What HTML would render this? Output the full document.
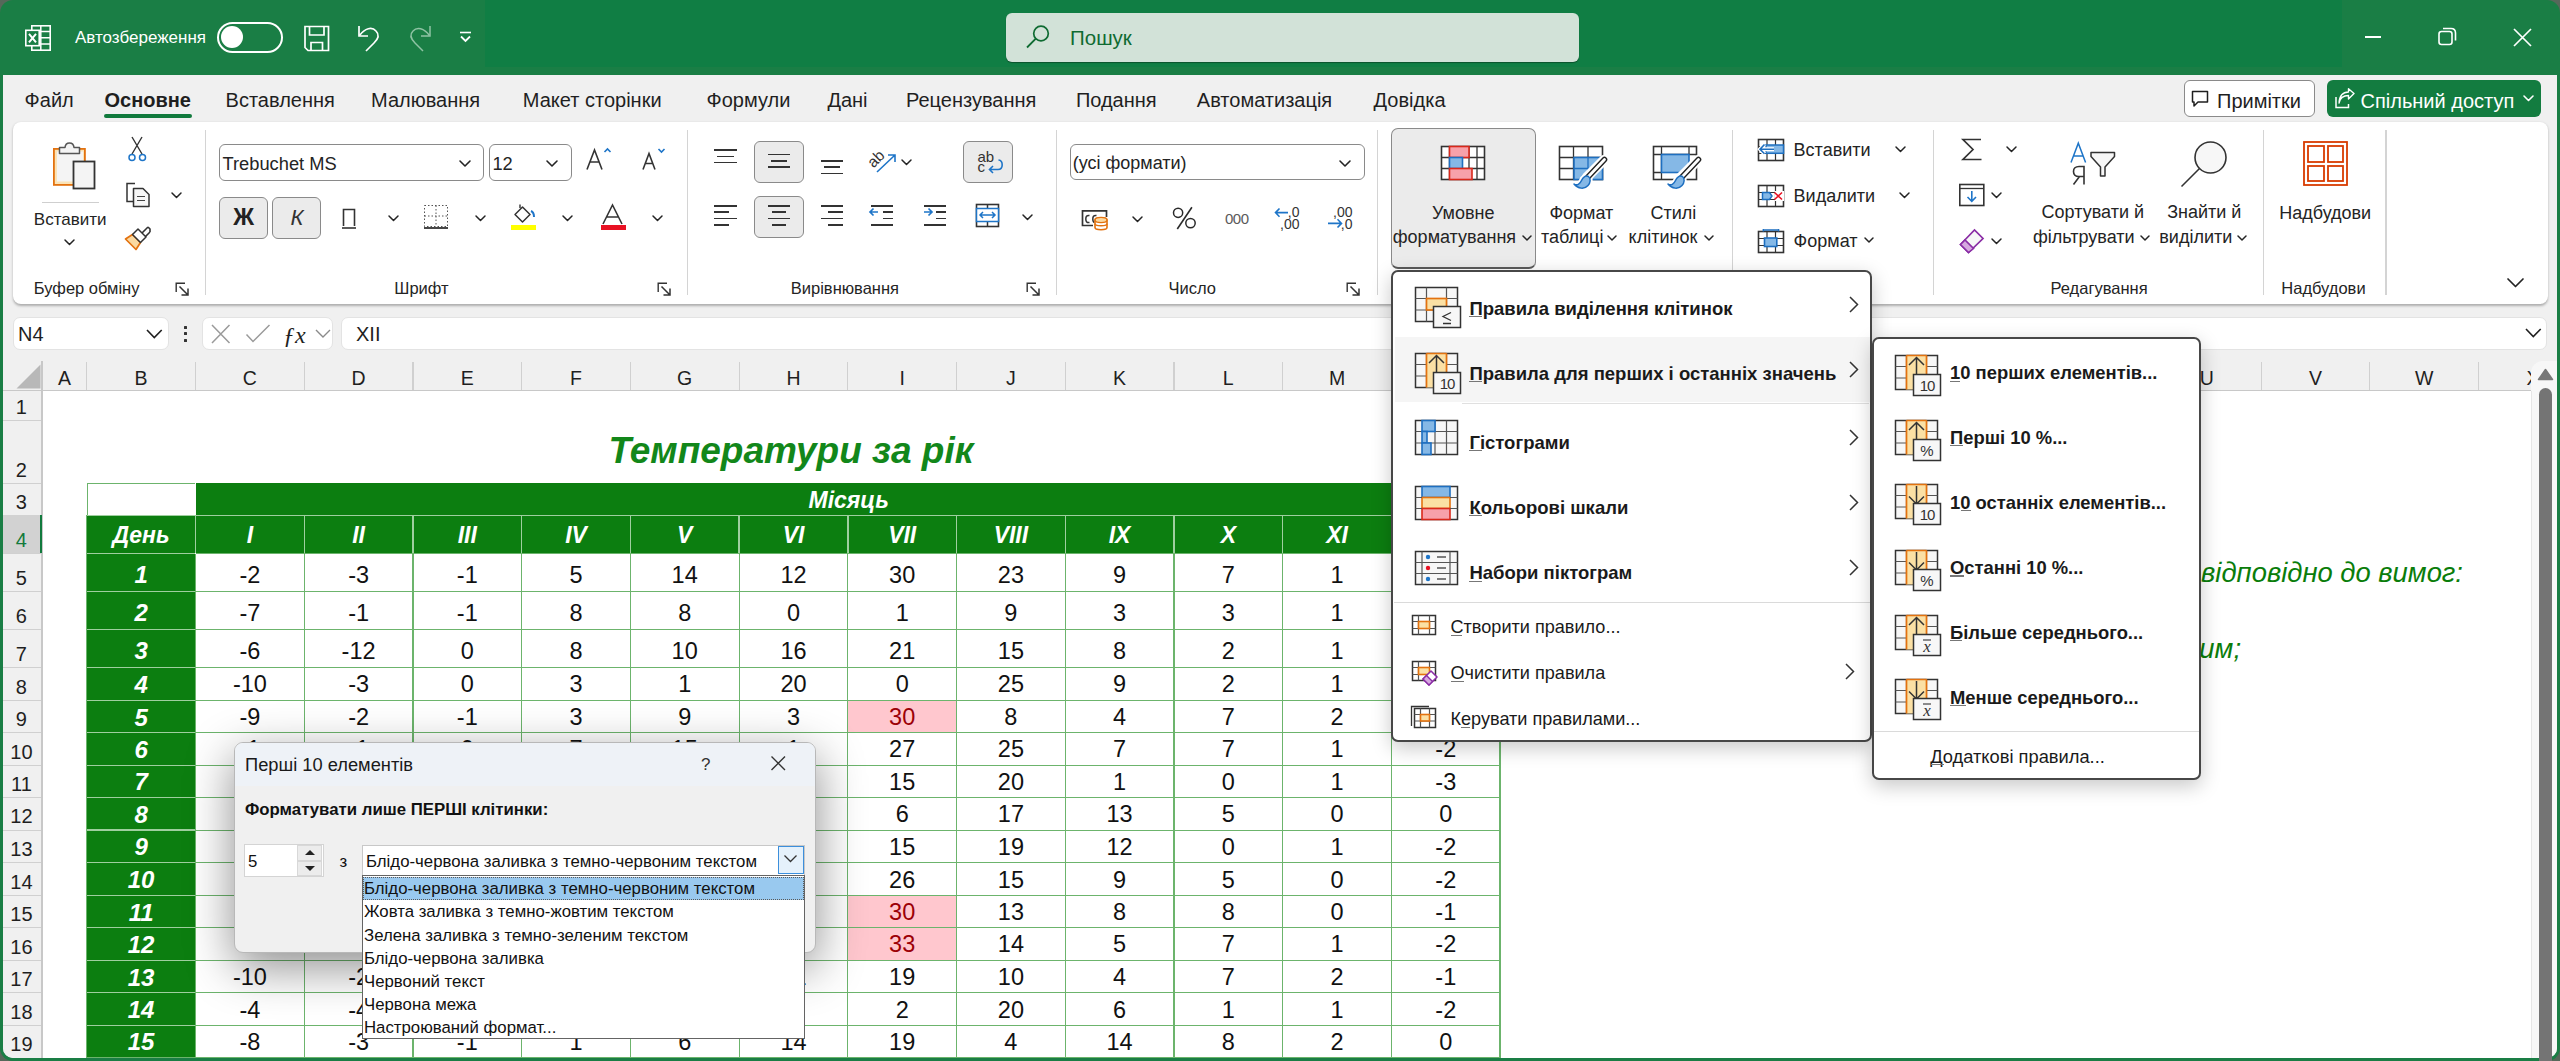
<!DOCTYPE html><html><head><meta charset="utf-8"><style>
html,body{margin:0;padding:0;}
body{width:2560px;height:1061px;overflow:hidden;position:relative;background:#56685a;font-family:"Liberation Sans", sans-serif;}
.b{position:absolute;}
.t{position:absolute;white-space:nowrap;line-height:1.15;}
</style></head><body>
<div class="b" style="left:0.00px;top:0.00px;width:2560.00px;height:1061.00px;background:#1a7e45;border-radius:13px;"></div>
<div class="b" style="left:485.00px;top:0.00px;width:1856.50px;height:66.80px;background:#107e44;"></div>
<div class="b" style="left:3.00px;top:75.00px;width:2554.00px;height:982.60px;background:#f0f0f0;border-radius:0 0 10px 10px;"></div>
<svg class="b" style="left:24.0px;top:24.0px;" width="28" height="28" viewBox="0 0 28 28" fill="none"><rect x="7.8" y="1.8" width="18.4" height="24.4" stroke="#fff" stroke-width="1.6" fill="none"/>
<path d="M15 7.6H26.2M15 13.8H26.2M15 20H26.2M16.8 1.8V26.2" stroke="#fff" stroke-width="1.5"/>
<rect x="1.8" y="6.3" width="13.4" height="15.4" fill="#1a7e45" stroke="#fff" stroke-width="1.6"/>
<path d="M5 9.8L12 18.3M12 9.8L5 18.3" stroke="#fff" stroke-width="2"/></svg>
<div class="t" style="left:75.0px;top:28.1px;font-size:17px;color:#ffffff;font-weight:normal;font-style:normal;">Автозбереження</div>
<div class="b" style="left:216.50px;top:21.50px;width:66.50px;height:31.00px;border:2px solid #fff;border-radius:16px;box-sizing:border-box;"></div>
<div class="b" style="left:221.00px;top:26.00px;width:22.00px;height:22.00px;background:#fff;border-radius:50%;"></div>
<svg class="b" style="left:303.0px;top:25.0px;" width="28" height="28" viewBox="0 0 28 28" fill="none"><path d="M2 1.5H25.5V25.5H5L2 22.5Z" stroke="#fff" stroke-width="1.7" fill="none"/>
<path d="M6.5 1.5V10H21V1.5" stroke="#fff" stroke-width="1.7"/>
<path d="M8 25.5V17.5H19.5V25.5" stroke="#fff" stroke-width="1.7"/></svg>
<svg class="b" style="left:355.0px;top:24.0px;" width="28" height="28" viewBox="0 0 28 28" fill="none"><path d="M4 2V12H13" stroke="#fff" stroke-width="1.7"/>
<path d="M4.5 11.5 C10 4 17 2.5 21 7 C25 11 23 15 19 19 L11 27" stroke="#fff" stroke-width="1.7" fill="none"/></svg>
<svg class="b" style="left:406.0px;top:24.0px;" width="28" height="28" viewBox="0 0 28 28" fill="none"><path d="M24 2V12H15" stroke="#8fc3a4" stroke-width="1.5"/>
<path d="M23.5 11.5 C18 4 11 2.5 7 7 C3 11 5 15 9 19 L17 27" stroke="#8fc3a4" stroke-width="1.5" fill="none"/></svg>
<svg class="b" style="left:458.0px;top:30.0px;" width="16" height="14" viewBox="0 0 16 14" fill="none"><path d="M2 2.5H13" stroke="#fff" stroke-width="1.6"/><path d="M3 6.5L7.5 11L12 6.5" stroke="#fff" stroke-width="1.8" fill="none"/></svg>
<div class="b" style="left:1005.50px;top:12.50px;width:573.50px;height:49.50px;background:#d2e2d8;border-radius:6px;box-shadow:0 1px 1px rgba(0,0,0,0.35);"></div>
<svg class="b" style="left:1025.0px;top:24.0px;" width="26" height="26" viewBox="0 0 26 26" fill="none"><circle cx="16" cy="9.5" r="7.3" stroke="#0f6b32" stroke-width="1.7"/><path d="M10.8 14.7L2 23.5" stroke="#0f6b32" stroke-width="1.8"/></svg>
<div class="t" style="left:1070.0px;top:26.1px;font-size:20.5px;color:#0f6b32;font-weight:normal;font-style:normal;">Пошук</div>
<div class="b" style="left:2364.50px;top:35.80px;width:16.00px;height:1.80px;background:#fff;"></div>
<svg class="b" style="left:2437.0px;top:26.0px;" width="22" height="22" viewBox="0 0 22 22" fill="none"><rect x="2" y="5.5" width="13" height="13" rx="2.5" stroke="#fff" stroke-width="1.6"/><path d="M6 2.5H14C17 2.5 18.5 4 18.5 7V14.5" stroke="#fff" stroke-width="1.6" fill="none"/></svg>
<svg class="b" style="left:2512.0px;top:27.0px;" width="22" height="22" viewBox="0 0 22 22" fill="none"><path d="M2 2L19 19M19 2L2 19" stroke="#fff" stroke-width="1.7"/></svg>
<div class="t" style="left:24.6px;top:89.4px;font-size:20px;color:#1f1f1f;font-weight:normal;font-style:normal;width:47px;">Файл</div>
<div class="t" style="left:104.5px;top:89.4px;font-size:20px;color:#1f1f1f;font-weight:bold;font-style:normal;width:85.5px;">Основне</div>
<div class="t" style="left:225.6px;top:89.4px;font-size:20px;color:#1f1f1f;font-weight:normal;font-style:normal;width:105.3px;">Вставлення</div>
<div class="t" style="left:371.0px;top:89.4px;font-size:20px;color:#1f1f1f;font-weight:normal;font-style:normal;width:110.8px;">Малювання</div>
<div class="t" style="left:522.8px;top:89.4px;font-size:20px;color:#1f1f1f;font-weight:normal;font-style:normal;width:143.6px;">Макет сторінки</div>
<div class="t" style="left:706.5px;top:89.4px;font-size:20px;color:#1f1f1f;font-weight:normal;font-style:normal;width:84.9px;">Формули</div>
<div class="t" style="left:827.4px;top:89.4px;font-size:20px;color:#1f1f1f;font-weight:normal;font-style:normal;width:41.6px;">Дані</div>
<div class="t" style="left:906.0px;top:89.4px;font-size:20px;color:#1f1f1f;font-weight:normal;font-style:normal;width:130.5px;">Рецензування</div>
<div class="t" style="left:1075.9px;top:89.4px;font-size:20px;color:#1f1f1f;font-weight:normal;font-style:normal;width:81.1px;">Подання</div>
<div class="t" style="left:1196.8px;top:89.4px;font-size:20px;color:#1f1f1f;font-weight:normal;font-style:normal;width:136.2px;">Автоматизація</div>
<div class="t" style="left:1373.6px;top:89.4px;font-size:20px;color:#1f1f1f;font-weight:normal;font-style:normal;width:72.8px;">Довідка</div>
<div class="b" style="left:104.00px;top:113.50px;width:88.00px;height:4.00px;background:#117a3d;border-radius:2px;"></div>
<div class="b" style="left:2183.50px;top:79.50px;width:131.50px;height:37.00px;background:#fff;border:1.3px solid #8a8a8a;border-radius:6px;box-sizing:border-box;"></div>
<svg class="b" style="left:2190.0px;top:89.0px;" width="22" height="20" viewBox="0 0 22 20" fill="none"><path d="M2.5 2.5H17.5V13H8L4 17V13H2.5Z" stroke="#1f1f1f" stroke-width="1.5" fill="none" stroke-linejoin="round"/></svg>
<div class="t" style="left:2217.0px;top:89.6px;font-size:20px;color:#1f1f1f;font-weight:normal;font-style:normal;">Примітки</div>
<div class="b" style="left:2327.00px;top:79.50px;width:214.00px;height:37.00px;background:#137c40;border-radius:6px;"></div>
<svg class="b" style="left:2333.0px;top:88.0px;" width="24" height="22" viewBox="0 0 24 22" fill="none"><path d="M3 9V19.5H15.5V16" stroke="#fff" stroke-width="1.5" fill="none"/><path d="M6 15C7 10 10.5 7.5 15.5 7.5V11L21 5.5L15.5 0.8V4C10 4 6.5 8 6 15Z" stroke="#fff" stroke-width="1.4" fill="none" stroke-linejoin="round"/></svg>
<div class="t" style="left:2360.5px;top:89.6px;font-size:20px;color:#ffffff;font-weight:normal;font-style:normal;">Спільний доступ</div>
<svg class="b" style="left:2521.5px;top:93.8px;" width="13" height="8.5" viewBox="0 0 13 8.5" fill="none"><path d="M2 2 L6.5 6.5 L11 2" stroke="#fff" stroke-width="1.6" stroke-linecap="round" stroke-linejoin="round"/></svg>
<div class="b" style="left:12.60px;top:121.80px;width:2535.20px;height:182.20px;background:#fff;border-radius:8px;box-shadow:0 1.5px 2.5px rgba(0,0,0,0.28);"></div>
<div class="b" style="left:205.00px;top:129.50px;width:1.20px;height:165.00px;background:#d4d4d4;"></div>
<div class="b" style="left:686.70px;top:129.50px;width:1.20px;height:165.00px;background:#d4d4d4;"></div>
<div class="b" style="left:1055.80px;top:129.50px;width:1.20px;height:165.00px;background:#d4d4d4;"></div>
<div class="b" style="left:1376.90px;top:129.50px;width:1.20px;height:165.00px;background:#d4d4d4;"></div>
<div class="b" style="left:1731.80px;top:129.50px;width:1.20px;height:165.00px;background:#d4d4d4;"></div>
<div class="b" style="left:1933.10px;top:129.50px;width:1.20px;height:165.00px;background:#d4d4d4;"></div>
<div class="b" style="left:2262.90px;top:129.50px;width:1.20px;height:165.00px;background:#d4d4d4;"></div>
<div class="b" style="left:2385.40px;top:129.50px;width:1.20px;height:165.00px;background:#d4d4d4;"></div>
<div class="t" style="left:33.8px;top:278.5px;font-size:16.5px;color:#242424;font-weight:normal;font-style:normal;">Буфер обміну</div>
<div class="t" style="left:394.3px;top:278.8px;font-size:16.5px;color:#242424;font-weight:normal;font-style:normal;">Шрифт</div>
<div class="t" style="left:790.8px;top:278.6px;font-size:16.5px;color:#242424;font-weight:normal;font-style:normal;">Вирівнювання</div>
<div class="t" style="left:1168.6px;top:278.6px;font-size:16.5px;color:#242424;font-weight:normal;font-style:normal;">Число</div>
<div class="t" style="left:2050.5px;top:279.4px;font-size:16.5px;color:#242424;font-weight:normal;font-style:normal;">Редагування</div>
<div class="t" style="left:2281.3px;top:278.8px;font-size:16.5px;color:#242424;font-weight:normal;font-style:normal;">Надбудови</div>
<svg class="b" style="left:174.5px;top:281.5px;" width="15" height="15" viewBox="0 0 15 15" fill="none"><path d="M1.2 10V1.2H10" stroke="#333" stroke-width="1.4" fill="none"/><path d="M4.5 4.5L13 13M13 6.5V13H6.5" stroke="#333" stroke-width="1.5" fill="none"/></svg>
<svg class="b" style="left:656.5px;top:281.5px;" width="15" height="15" viewBox="0 0 15 15" fill="none"><path d="M1.2 10V1.2H10" stroke="#333" stroke-width="1.4" fill="none"/><path d="M4.5 4.5L13 13M13 6.5V13H6.5" stroke="#333" stroke-width="1.5" fill="none"/></svg>
<svg class="b" style="left:1025.5px;top:281.5px;" width="15" height="15" viewBox="0 0 15 15" fill="none"><path d="M1.2 10V1.2H10" stroke="#333" stroke-width="1.4" fill="none"/><path d="M4.5 4.5L13 13M13 6.5V13H6.5" stroke="#333" stroke-width="1.5" fill="none"/></svg>
<svg class="b" style="left:1346.3px;top:281.5px;" width="15" height="15" viewBox="0 0 15 15" fill="none"><path d="M1.2 10V1.2H10" stroke="#333" stroke-width="1.4" fill="none"/><path d="M4.5 4.5L13 13M13 6.5V13H6.5" stroke="#333" stroke-width="1.5" fill="none"/></svg>
<svg class="b" style="left:50.0px;top:140.0px;" width="48" height="50" viewBox="0 0 48 50" fill="none"><rect x="3.9" y="8.9" width="31" height="36" stroke="#e3720f" stroke-width="1.8" fill="#fbe3b6"/>
<rect x="7" y="11.5" width="26" height="30" fill="#f4f4f4"/>
<path d="M9.5 13.5V7.5H15C15.5 1.5 23.5 1.5 24 7.5H29.5V13.5Z" stroke="#555" stroke-width="1.5" fill="#f4f4f4" stroke-linejoin="round"/>
<rect x="23.5" y="21.5" width="21" height="27" stroke="#333" stroke-width="1.8" fill="#f4f4f4"/></svg>
<div class="b" style="left:42.00px;top:201.50px;width:57.00px;height:1.10px;background:#cfcfcf;"></div>
<div class="t" style="left:33.8px;top:209.8px;font-size:17px;color:#242424;font-weight:normal;font-style:normal;">Вставити</div>
<svg class="b" style="left:62.5px;top:238.2px;" width="13" height="8.5" viewBox="0 0 13 8.5" fill="none"><path d="M2 2 L6.5 6.5 L11 2" stroke="#242424" stroke-width="1.5" stroke-linecap="round" stroke-linejoin="round"/></svg>
<svg class="b" style="left:126.0px;top:135.0px;" width="24" height="28" viewBox="0 0 24 28" fill="none"><path d="M6 2L16 19M16 2L6 19" stroke="#333" stroke-width="1.4"/>
<circle cx="6" cy="22.5" r="3" stroke="#1e75c8" stroke-width="1.5" fill="#fff"/><circle cx="16.5" cy="22.5" r="3" stroke="#1e75c8" stroke-width="1.5" fill="#fff"/></svg>
<svg class="b" style="left:123.0px;top:181.0px;" width="30" height="28" viewBox="0 0 30 28" fill="none"><path d="M12 2.5H4V20.5H10" stroke="#333" stroke-width="1.5" fill="none"/>
<path d="M10.5 7.5H20L26 13.5V25.5H10.5Z" stroke="#333" stroke-width="1.5" fill="#f7f7f7" stroke-linejoin="round"/>
<path d="M14 15.5H22M14 19.5H22" stroke="#444" stroke-width="1.2"/></svg>
<svg class="b" style="left:170.2px;top:190.8px;" width="13" height="8.5" viewBox="0 0 13 8.5" fill="none"><path d="M2 2 L6.5 6.5 L11 2" stroke="#242424" stroke-width="1.5" stroke-linecap="round" stroke-linejoin="round"/></svg>
<svg class="b" style="left:123.0px;top:225.0px;" width="30" height="28" viewBox="0 0 30 28" fill="none"><path d="M2.5 14L13 24.5L17.5 17.5L9.5 9.5Z" stroke="#e3720f" stroke-width="1.7" fill="#fbd9a0" stroke-linejoin="round"/>
<path d="M9.5 9.5L15 4L23 12L17.5 17.5Z" stroke="#333" stroke-width="1.5" fill="#fff" stroke-linejoin="round"/><path d="M19 8L25 2M22.5 11.5L27 7M25 2L27 4L27 7" stroke="#333" stroke-width="1.6" fill="none"/></svg>
<div class="b" style="left:219.00px;top:144.00px;width:265.20px;height:36.70px;border:1.3px solid #8a8a8a;border-radius:6px;box-sizing:border-box;"></div>
<div class="t" style="left:222.5px;top:153.1px;font-size:18.3px;color:#242424;font-weight:normal;font-style:normal;">Trebuchet MS</div>
<svg class="b" style="left:457.6px;top:158.5px;" width="14" height="9.0" viewBox="0 0 14 9.0" fill="none"><path d="M2 2 L7.0 7.0 L12 2" stroke="#242424" stroke-width="1.6" stroke-linecap="round" stroke-linejoin="round"/></svg>
<div class="b" style="left:488.70px;top:144.00px;width:83.00px;height:36.70px;border:1.3px solid #8a8a8a;border-radius:6px;box-sizing:border-box;"></div>
<div class="t" style="left:492.4px;top:153.1px;font-size:18.3px;color:#242424;font-weight:normal;font-style:normal;">12</div>
<svg class="b" style="left:545.0px;top:158.5px;" width="14" height="9.0" viewBox="0 0 14 9.0" fill="none"><path d="M2 2 L7.0 7.0 L12 2" stroke="#242424" stroke-width="1.6" stroke-linecap="round" stroke-linejoin="round"/></svg>
<svg class="b" style="left:584.0px;top:146.0px;" width="30" height="26" viewBox="0 0 30 26" fill="none"><path d="M3 23.5L10.5 4L18 23.5M5.8 16H15.2" stroke="#333" stroke-width="1.6" fill="none"/><path d="M20.5 6L23.5 3L26.5 6" stroke="#1e75c8" stroke-width="1.6" fill="none"/></svg>
<svg class="b" style="left:640.0px;top:146.0px;" width="28" height="26" viewBox="0 0 28 26" fill="none"><path d="M3 23.5L9 7.5L15 23.5M5.3 17.5H12.7" stroke="#333" stroke-width="1.6" fill="none"/><path d="M18.5 3L21.5 6L24.5 3" stroke="#1e75c8" stroke-width="1.6" fill="none"/></svg>
<div class="b" style="left:219.00px;top:197.30px;width:49.40px;height:41.40px;background:#ebebeb;border:1.3px solid #8a8a8a;border-radius:6px;box-sizing:border-box;"></div>
<div class="b" style="left:272.30px;top:197.30px;width:49.20px;height:41.40px;background:#ebebeb;border:1.3px solid #8a8a8a;border-radius:6px;box-sizing:border-box;"></div>
<div class="t" style="left:213.7px;width:60px;text-align:center;top:204.3px;font-size:23px;color:#222;font-weight:bold;font-style:normal;">Ж</div>
<div class="t" style="left:266.9px;width:60px;text-align:center;top:205.2px;font-size:22px;color:#333;font-weight:normal;font-style:italic;">К</div>
<svg class="b" style="left:340.0px;top:206.0px;" width="18" height="24" viewBox="0 0 18 24" fill="none"><path d="M3.5 20V3.5H14.5V20" stroke="#333" stroke-width="1.6" fill="none"/><path d="M2 22H16" stroke="#333" stroke-width="1.6"/></svg>
<svg class="b" style="left:386.9px;top:214.2px;" width="13" height="8.5" viewBox="0 0 13 8.5" fill="none"><path d="M2 2 L6.5 6.5 L11 2" stroke="#242424" stroke-width="1.5" stroke-linecap="round" stroke-linejoin="round"/></svg>
<svg class="b" style="left:422.0px;top:203.0px;" width="28" height="28" viewBox="0 0 28 28" fill="none"><path d="M2.5 2.5H25.5V23.5H2.5Z M14 2.5V23.5 M2.5 13H25.5" stroke="#555" stroke-width="1" stroke-dasharray="1.5 2" fill="none"/><path d="M2 25H26" stroke="#333" stroke-width="1.8"/></svg>
<svg class="b" style="left:473.8px;top:214.2px;" width="13" height="8.5" viewBox="0 0 13 8.5" fill="none"><path d="M2 2 L6.5 6.5 L11 2" stroke="#242424" stroke-width="1.5" stroke-linecap="round" stroke-linejoin="round"/></svg>
<svg class="b" style="left:510.0px;top:203.0px;" width="28" height="30" viewBox="0 0 28 30" fill="none"><path d="M5 11.5L12.5 4L20 11.5L12.5 19Z" stroke="#333" stroke-width="1.5" fill="#fff" stroke-linejoin="round"/><path d="M10 5L10 1.5" stroke="#333" stroke-width="1.4"/><path d="M21 8C23.5 9 24 11 24 14" stroke="#1e75c8" stroke-width="2" fill="none"/></svg>
<div class="b" style="left:511.00px;top:224.60px;width:25.30px;height:5.90px;background:#ffff00;"></div>
<svg class="b" style="left:560.5px;top:214.2px;" width="13" height="8.5" viewBox="0 0 13 8.5" fill="none"><path d="M2 2 L6.5 6.5 L11 2" stroke="#242424" stroke-width="1.5" stroke-linecap="round" stroke-linejoin="round"/></svg>
<svg class="b" style="left:600.0px;top:203.0px;" width="28" height="24" viewBox="0 0 28 24" fill="none"><path d="M3 21L12.5 2L22 21M6.5 14H18.5" stroke="#333" stroke-width="1.6" fill="none"/></svg>
<div class="b" style="left:601.00px;top:224.60px;width:25.00px;height:5.90px;background:#e81123;"></div>
<svg class="b" style="left:650.5px;top:214.2px;" width="13" height="8.5" viewBox="0 0 13 8.5" fill="none"><path d="M2 2 L6.5 6.5 L11 2" stroke="#242424" stroke-width="1.5" stroke-linecap="round" stroke-linejoin="round"/></svg>
<div class="b" style="left:754.00px;top:141.00px;width:49.70px;height:41.50px;background:#ebebeb;border:1.3px solid #8a8a8a;border-radius:6px;box-sizing:border-box;"></div>
<div class="b" style="left:754.00px;top:196.00px;width:49.70px;height:41.50px;background:#ebebeb;border:1.3px solid #8a8a8a;border-radius:6px;box-sizing:border-box;"></div>
<div class="b" style="left:963.40px;top:141.00px;width:49.20px;height:41.50px;background:#ebebeb;border:1.3px solid #8a8a8a;border-radius:6px;box-sizing:border-box;"></div>
<div class="b" style="left:714.40px;top:149.43px;width:22.30px;height:1.75px;background:#333;"></div><div class="b" style="left:717.40px;top:155.53px;width:16.30px;height:1.75px;background:#333;"></div><div class="b" style="left:714.40px;top:161.62px;width:22.30px;height:1.75px;background:#333;"></div>
<div class="b" style="left:767.60px;top:153.72px;width:22.10px;height:1.75px;background:#333;"></div><div class="b" style="left:770.60px;top:159.82px;width:16.10px;height:1.75px;background:#333;"></div><div class="b" style="left:767.60px;top:166.32px;width:22.10px;height:1.75px;background:#333;"></div>
<div class="b" style="left:821.00px;top:159.82px;width:22.10px;height:1.75px;background:#333;"></div><div class="b" style="left:824.00px;top:166.32px;width:16.10px;height:1.75px;background:#333;"></div><div class="b" style="left:821.00px;top:172.53px;width:22.10px;height:1.75px;background:#333;"></div>
<div class="b" style="left:714.40px;top:205.12px;width:22.30px;height:1.75px;background:#333;"></div><div class="b" style="left:714.40px;top:211.12px;width:15.00px;height:1.75px;background:#333;"></div><div class="b" style="left:714.40px;top:217.53px;width:22.30px;height:1.75px;background:#333;"></div><div class="b" style="left:714.40px;top:224.12px;width:15.00px;height:1.75px;background:#333;"></div>
<div class="b" style="left:767.60px;top:205.12px;width:22.10px;height:1.75px;background:#333;"></div><div class="b" style="left:771.60px;top:211.12px;width:14.00px;height:1.75px;background:#333;"></div><div class="b" style="left:767.60px;top:217.53px;width:22.10px;height:1.75px;background:#333;"></div><div class="b" style="left:771.60px;top:224.12px;width:14.00px;height:1.75px;background:#333;"></div>
<div class="b" style="left:821.00px;top:205.12px;width:22.10px;height:1.75px;background:#333;"></div><div class="b" style="left:828.00px;top:211.12px;width:15.10px;height:1.75px;background:#333;"></div><div class="b" style="left:821.00px;top:217.53px;width:22.10px;height:1.75px;background:#333;"></div><div class="b" style="left:828.00px;top:224.12px;width:15.10px;height:1.75px;background:#333;"></div>
<div class="b" style="left:871.00px;top:205.12px;width:22.30px;height:1.75px;background:#333;"></div><div class="b" style="left:883.00px;top:217.53px;width:10.30px;height:1.75px;background:#333;"></div><div class="b" style="left:871.00px;top:224.12px;width:22.30px;height:1.75px;background:#333;"></div>
<div class="b" style="left:883.00px;top:211.30px;width:10.30px;height:1.60px;background:#333;"></div>
<div class="b" style="left:924.00px;top:205.12px;width:22.30px;height:1.75px;background:#333;"></div><div class="b" style="left:936.00px;top:217.53px;width:10.30px;height:1.75px;background:#333;"></div><div class="b" style="left:924.00px;top:224.12px;width:22.30px;height:1.75px;background:#333;"></div>
<div class="b" style="left:936.00px;top:211.30px;width:10.30px;height:1.60px;background:#333;"></div>
<svg class="b" style="left:868.0px;top:206.0px;" width="14" height="14" viewBox="0 0 14 14" fill="none"><path d="M10 6H2M5.5 2.5L2 6L5.5 9.5" stroke="#1e75c8" stroke-width="1.7" fill="none"/></svg>
<svg class="b" style="left:922.0px;top:206.0px;" width="14" height="14" viewBox="0 0 14 14" fill="none"><path d="M2 6H10M6.5 2.5L10 6L6.5 9.5" stroke="#1e75c8" stroke-width="1.7" fill="none"/></svg>
<svg class="b" style="left:864.0px;top:144.0px;" width="36" height="32" viewBox="0 0 36 32" fill="none"><text x="0" y="0" transform="translate(9.5,24.5) rotate(-45)" font-family="Liberation Sans" font-size="15.5" fill="#333">ab</text><path d="M13 28L30.5 11.5M24 11H31V18" stroke="#1e75c8" stroke-width="1.6" fill="none"/></svg>
<svg class="b" style="left:900.2px;top:157.8px;" width="13" height="8.5" viewBox="0 0 13 8.5" fill="none"><path d="M2 2 L6.5 6.5 L11 2" stroke="#242424" stroke-width="1.5" stroke-linecap="round" stroke-linejoin="round"/></svg>
<svg class="b" style="left:974.0px;top:148.0px;" width="32" height="28" viewBox="0 0 32 28" fill="none"><text x="3.5" y="13.8" font-family="Liberation Sans" font-size="15" fill="#333">ab</text><text x="3.5" y="24" font-family="Liberation Sans" font-size="15" fill="#333">c</text><path d="M24.5 12C29.5 12.5 29.5 21.5 24 21.5H15.5M19 18L15.5 21.5L19 25" stroke="#1e75c8" stroke-width="1.6" fill="none"/></svg>
<svg class="b" style="left:974.0px;top:202.0px;" width="28" height="28" viewBox="0 0 28 28" fill="none"><rect x="2.5" y="2.5" width="22" height="22" stroke="#333" stroke-width="1.6" fill="#fff"/><path d="M13.5 2.5V24.5" stroke="#333" stroke-width="1.5"/><rect x="2.5" y="6.5" width="22" height="13" stroke="#1e75c8" stroke-width="1.5" fill="#fff"/><path d="M6 13H21M9 10L6 13L9 16M18 10L21 13L18 16" stroke="#1e75c8" stroke-width="1.5" fill="none"/></svg>
<svg class="b" style="left:1020.9px;top:212.8px;" width="13" height="8.5" viewBox="0 0 13 8.5" fill="none"><path d="M2 2 L6.5 6.5 L11 2" stroke="#242424" stroke-width="1.5" stroke-linecap="round" stroke-linejoin="round"/></svg>
<div class="b" style="left:1069.50px;top:144.20px;width:295.80px;height:36.30px;border:1.3px solid #8a8a8a;border-radius:6px;box-sizing:border-box;"></div>
<div class="t" style="left:1072.7px;top:152.9px;font-size:18px;color:#242424;font-weight:normal;font-style:normal;">(усі формати)</div>
<svg class="b" style="left:1338.3px;top:158.9px;" width="14" height="9.0" viewBox="0 0 14 9.0" fill="none"><path d="M2 2 L7.0 7.0 L12 2" stroke="#242424" stroke-width="1.6" stroke-linecap="round" stroke-linejoin="round"/></svg>
<svg class="b" style="left:1080.0px;top:208.0px;" width="30" height="26" viewBox="0 0 30 26" fill="none"><path d="M13 17.5H2.5V2.8H26.5V9" stroke="#333" stroke-width="1.7" fill="#fff"/><path d="M9.5 7.5C6.5 7 5.8 9 5.8 11C5.8 13 6.5 15 9.5 14.5M16.5 7.5C13.5 7 12.8 9 12.8 11C12.8 13 13.5 14.2 14.5 14.5" stroke="#333" stroke-width="1.5" fill="none"/>
<path d="M15 12C15 9.2 27 9.2 27 12V19.5C27 22.5 15 22.5 15 19.5Z" fill="#fff" stroke="#e3720f" stroke-width="1.6"/><ellipse cx="21" cy="12" rx="6" ry="2.6" fill="#fbd9a0" stroke="#e3720f" stroke-width="1.4"/><path d="M15 15.8C15 18.5 27 18.5 27 15.8" stroke="#e3720f" stroke-width="1.5" fill="none"/></svg>
<svg class="b" style="left:1131.2px;top:214.6px;" width="13" height="8.5" viewBox="0 0 13 8.5" fill="none"><path d="M2 2 L6.5 6.5 L11 2" stroke="#242424" stroke-width="1.5" stroke-linecap="round" stroke-linejoin="round"/></svg>
<svg class="b" style="left:1170.0px;top:204.0px;" width="28" height="30" viewBox="0 0 28 30" fill="none"><circle cx="8.1" cy="8.8" r="4.6" stroke="#2a2a2a" stroke-width="1.5"/><circle cx="20.5" cy="19.1" r="4.7" stroke="#2a2a2a" stroke-width="1.5"/><path d="M21.9 3.3L7.3 25" stroke="#2a2a2a" stroke-width="1.6"/></svg>
<div class="t" style="left:1225.0px;top:209.8px;font-size:15px;color:#5a5a5a;font-weight:normal;font-style:normal;letter-spacing:-0.5px;">000</div>
<svg class="b" style="left:1272.0px;top:203.0px;" width="30" height="30" viewBox="0 0 30 30" fill="none"><text x="27.5" y="13.5" text-anchor="end" font-family="Liberation Sans" font-size="14" fill="#333">,0</text><text x="27.5" y="26" text-anchor="end" font-family="Liberation Sans" font-size="14" fill="#333">,00</text>
<path d="M16 9.6H3.5M7.5 5.5L3.5 9.6L7.5 13.7" stroke="#1e75c8" stroke-width="1.6" fill="none"/></svg>
<svg class="b" style="left:1325.0px;top:203.0px;" width="30" height="30" viewBox="0 0 30 30" fill="none"><text x="27.5" y="13.5" text-anchor="end" font-family="Liberation Sans" font-size="14" fill="#333">,00</text><text x="27.5" y="26" text-anchor="end" font-family="Liberation Sans" font-size="14" fill="#333">,0</text>
<path d="M3 20.4H16.5M12.5 16.3L16.5 20.4L12.5 24.5" stroke="#1e75c8" stroke-width="1.6" fill="none"/></svg>
<div class="b" style="left:1390.90px;top:128.30px;width:144.80px;height:140.50px;background:#ebebeb;border:1.3px solid #8a8a8a;border-bottom:2px solid #5a5a5a;border-radius:7px;box-sizing:border-box;"></div>
<svg class="b" style="left:1439.0px;top:144.0px;" width="48" height="40" viewBox="0 0 48 40" fill="none"><rect x="2.5" y="2.5" width="43" height="33" stroke="#333" stroke-width="1.6" fill="#fff"/>
<path d="M2.5 13.5H45.5M2.5 24.5H45.5M10.5 2.5V35.5M30 2.5V35.5M38 2.5V35.5" stroke="#333" stroke-width="1.3"/>
<rect x="10.5" y="2.5" width="19.5" height="11" fill="#f7a1aa" stroke="#d9281b" stroke-width="1.6"/>
<rect x="10.5" y="13.5" width="13" height="11" fill="#85b8e6" stroke="#1e6fc0" stroke-width="1.6"/>
<rect x="10.5" y="24.5" width="22.5" height="11" fill="#f7a1aa" stroke="#d9281b" stroke-width="1.6"/></svg>
<div class="t" style="left:1063.2px;width:800px;text-align:center;top:202.6px;font-size:18px;color:#242424;font-weight:normal;font-style:normal;">Умовне</div>
<div class="t" style="left:1392.8px;top:227.1px;font-size:18px;color:#242424;font-weight:normal;font-style:normal;">форматування</div>
<svg class="b" style="left:1521.0px;top:233.5px;" width="12" height="8.0" viewBox="0 0 12 8.0" fill="none"><path d="M2 2 L6.0 6.0 L10 2" stroke="#242424" stroke-width="1.5" stroke-linecap="round" stroke-linejoin="round"/></svg>
<svg class="b" style="left:1557.0px;top:144.0px;" width="52" height="48" viewBox="0 0 52 48" fill="none"><rect x="2.5" y="2.5" width="43" height="33" stroke="#333" stroke-width="1.6" fill="#fff"/><path d="M2.5 13.5H45.5M2.5 24.5H17M16.5 2.5V35.5M31 2.5V13.5" stroke="#333" stroke-width="1.3"/><rect x="17" y="13.5" width="28.5" height="22" fill="#85b8e6" stroke="#1e6fc0" stroke-width="1.6"/><path d="M17 24.5H45.5M31 13.5V35.5" stroke="#1e6fc0" stroke-width="1.3"/><path d="M30 33L47 16" stroke="#fff" stroke-width="10" stroke-linecap="round"/><path d="M17 40C20 42 23 40 24.5 36.5C26 33 29 31 31.5 32.5C34 34.5 33.5 39 31 41.5C27.5 45.5 21 45 17 40Z" fill="#fff" stroke="#fff" stroke-width="5" stroke-linejoin="round"/><path d="M31 33L47.5 15.5" stroke="#222" stroke-width="5.6" stroke-linecap="round"/><path d="M31 33L47.5 15.5" stroke="#fff" stroke-width="2.8" stroke-linecap="round"/><path d="M17 40C20 42 23 40 24.5 36.5C26 33 29 31 31.5 32.5C34 34.5 33.5 39 31 41.5C27.5 45.5 21 45 17 40Z" fill="#85b8e6" stroke="#1e6fc0" stroke-width="1.5" stroke-linejoin="round"/></svg>
<svg class="b" style="left:1650.5px;top:144.0px;" width="52" height="48" viewBox="0 0 52 48" fill="none"><rect x="2.5" y="2.5" width="43" height="33" stroke="#333" stroke-width="1.6" fill="#fff"/><path d="M2.5 10.5H45.5M2.5 28.5H10.5M10.5 2.5V35.5M38 2.5V10.5" stroke="#333" stroke-width="1.3"/><rect x="10.5" y="10.5" width="27.5" height="18" fill="#85b8e6" stroke="#1e6fc0" stroke-width="1.6"/><path d="M30 33L47 16" stroke="#fff" stroke-width="10" stroke-linecap="round"/><path d="M17 40C20 42 23 40 24.5 36.5C26 33 29 31 31.5 32.5C34 34.5 33.5 39 31 41.5C27.5 45.5 21 45 17 40Z" fill="#fff" stroke="#fff" stroke-width="5" stroke-linejoin="round"/><path d="M31 33L47.5 15.5" stroke="#222" stroke-width="5.6" stroke-linecap="round"/><path d="M31 33L47.5 15.5" stroke="#fff" stroke-width="2.8" stroke-linecap="round"/><path d="M17 40C20 42 23 40 24.5 36.5C26 33 29 31 31.5 32.5C34 34.5 33.5 39 31 41.5C27.5 45.5 21 45 17 40Z" fill="#85b8e6" stroke="#1e6fc0" stroke-width="1.5" stroke-linejoin="round"/></svg>
<div class="t" style="left:1181.4px;width:800px;text-align:center;top:202.6px;font-size:18px;color:#242424;font-weight:normal;font-style:normal;">Формат</div>
<div class="t" style="left:1541.0px;top:227.1px;font-size:18px;color:#242424;font-weight:normal;font-style:normal;">таблиці</div>
<svg class="b" style="left:1606.0px;top:233.5px;" width="12" height="8.0" viewBox="0 0 12 8.0" fill="none"><path d="M2 2 L6.0 6.0 L10 2" stroke="#242424" stroke-width="1.5" stroke-linecap="round" stroke-linejoin="round"/></svg>
<div class="t" style="left:1273.3px;width:800px;text-align:center;top:202.6px;font-size:18px;color:#242424;font-weight:normal;font-style:normal;">Стилі</div>
<div class="t" style="left:1628.6px;top:227.1px;font-size:18px;color:#242424;font-weight:normal;font-style:normal;">клітинок</div>
<svg class="b" style="left:1703.0px;top:233.5px;" width="12" height="8.0" viewBox="0 0 12 8.0" fill="none"><path d="M2 2 L6.0 6.0 L10 2" stroke="#242424" stroke-width="1.5" stroke-linecap="round" stroke-linejoin="round"/></svg>
<svg class="b" style="left:1757.0px;top:137.0px;" width="28" height="25" viewBox="0 -1 28 25" fill="none"><rect x="1.5" y="1.5" width="25" height="21" stroke="#333" stroke-width="1.6" fill="#fff"/><path d="M1.5 8.5H26.5M1.5 15.5H26.5M10 1.5V22.5M18.5 1.5V22.5" stroke="#333" stroke-width="1.2"/><rect x="9" y="7" width="17.5" height="8.3" fill="#85b8e6" stroke="#1e6fc0" stroke-width="1.5"/><path d="M17 11.2H3M7.5 6.5L3 11.2L7.5 15.8" stroke="#fff" stroke-width="4" fill="none"/><path d="M17 11.2H3M7.5 6.5L3 11.2L7.5 15.8" stroke="#1e6fc0" stroke-width="1.6" fill="none"/></svg>
<svg class="b" style="left:1757.0px;top:182.5px;" width="28" height="25" viewBox="0 -1 28 25" fill="none"><rect x="1.5" y="1.5" width="25" height="21" stroke="#333" stroke-width="1.6" fill="#fff"/><path d="M1.5 8.5H26.5M1.5 15.5H26.5M10 1.5V22.5M18.5 1.5V22.5" stroke="#333" stroke-width="1.2"/><rect x="18" y="7" width="9" height="10" fill="#fff"/><path d="M5.5 8.5H12.5L15 12L12.5 15.5H5.5Z" fill="#85b8e6" stroke="#1e6fc0" stroke-width="1.5"/><path d="M17.5 8.5L25 15.5M25 8.5L17.5 15.5" stroke="#e81123" stroke-width="1.6"/></svg>
<svg class="b" style="left:1757.0px;top:228.5px;" width="28" height="25" viewBox="0 -1 28 25" fill="none"><rect x="1.5" y="1.5" width="25" height="21" stroke="#333" stroke-width="1.6" fill="#fff"/><path d="M1.5 8.5H26.5M1.5 15.5H26.5M10 1.5V22.5M18.5 1.5V22.5" stroke="#333" stroke-width="1.2"/><rect x="7.5" y="8" width="12.3" height="8.5" fill="#85b8e6" stroke="#1e6fc0" stroke-width="1.6"/><path d="M6.3 -1.5V1.5M21.6 -1.5V1.5M6.3 0H21.6" stroke="#1e6fc0" stroke-width="1.4"/></svg>
<div class="t" style="left:1793.6px;top:140.1px;font-size:18px;color:#242424;font-weight:normal;font-style:normal;">Вставити</div>
<svg class="b" style="left:1893.5px;top:145.3px;" width="13" height="8.5" viewBox="0 0 13 8.5" fill="none"><path d="M2 2 L6.5 6.5 L11 2" stroke="#242424" stroke-width="1.5" stroke-linecap="round" stroke-linejoin="round"/></svg>
<div class="t" style="left:1793.6px;top:185.8px;font-size:18px;color:#242424;font-weight:normal;font-style:normal;">Видалити</div>
<svg class="b" style="left:1898.1px;top:190.9px;" width="13" height="8.5" viewBox="0 0 13 8.5" fill="none"><path d="M2 2 L6.5 6.5 L11 2" stroke="#242424" stroke-width="1.5" stroke-linecap="round" stroke-linejoin="round"/></svg>
<div class="t" style="left:1793.6px;top:230.9px;font-size:18px;color:#242424;font-weight:normal;font-style:normal;">Формат</div>
<svg class="b" style="left:1863.4px;top:236.4px;" width="12" height="8.0" viewBox="0 0 12 8.0" fill="none"><path d="M2 2 L6.0 6.0 L10 2" stroke="#242424" stroke-width="1.5" stroke-linecap="round" stroke-linejoin="round"/></svg>
<svg class="b" style="left:1960.0px;top:136.0px;" width="26" height="27" viewBox="0 0 26 27" fill="none"><path d="M21 3.5H3L13 13.5L3 23.5H21.5" stroke="#333" stroke-width="1.7" fill="none" stroke-linejoin="miter"/></svg>
<svg class="b" style="left:2004.5px;top:145.3px;" width="13" height="8.5" viewBox="0 0 13 8.5" fill="none"><path d="M2 2 L6.5 6.5 L11 2" stroke="#242424" stroke-width="1.5" stroke-linecap="round" stroke-linejoin="round"/></svg>
<svg class="b" style="left:1958.0px;top:182.0px;" width="28" height="26" viewBox="0 0 28 26" fill="none"><rect x="1.8" y="2.5" width="24" height="21" stroke="#333" stroke-width="1.6" fill="#fff"/><path d="M1.8 6.5H25.8" stroke="#333" stroke-width="1.3"/><path d="M13.8 9V19M9.5 15L13.8 19.3L18 15" stroke="#1e75c8" stroke-width="1.6" fill="none"/></svg>
<svg class="b" style="left:1990.1px;top:190.8px;" width="13" height="8.5" viewBox="0 0 13 8.5" fill="none"><path d="M2 2 L6.5 6.5 L11 2" stroke="#242424" stroke-width="1.5" stroke-linecap="round" stroke-linejoin="round"/></svg>
<svg class="b" style="left:1957.0px;top:227.0px;" width="30" height="28" viewBox="0 0 30 28" fill="none"><path d="M3.5 17.5L17.5 3L26 11.5L11.5 25.5Z" stroke="#8a2da5" stroke-width="1.7" fill="#f7f7f7" stroke-linejoin="miter"/><path d="M3.5 17.5L8 13L16.5 21.5L11.5 25.5Z" fill="#d6a8e0" stroke="#8a2da5" stroke-width="1.6" stroke-linejoin="miter"/></svg>
<svg class="b" style="left:1990.1px;top:236.8px;" width="13" height="8.5" viewBox="0 0 13 8.5" fill="none"><path d="M2 2 L6.5 6.5 L11 2" stroke="#242424" stroke-width="1.5" stroke-linecap="round" stroke-linejoin="round"/></svg>
<svg class="b" style="left:2068.0px;top:141.0px;" width="22" height="24" viewBox="0 0 22 24" fill="none"><path d="M3 21.5L10.3 2.2L17.6 21.5M5.6 15H15" stroke="#1e75c8" stroke-width="1.5" fill="none"/></svg>
<svg class="b" style="left:2070.0px;top:164.0px;" width="18" height="22" viewBox="0 0 18 22" fill="none"><path d="M14 20.5V2.5H9C5.5 2.5 3.5 4.5 3.5 7.5C3.5 10.5 5.5 12.5 9 12.5H14M9.5 12.5L3.5 20.5" stroke="#333" stroke-width="1.6" fill="none"/></svg>
<svg class="b" style="left:2088.0px;top:150.0px;" width="30" height="28" viewBox="0 0 30 28" fill="none"><path d="M3 2.5H26.5V6.5L17 17V26H12.5V17L3 6.5Z" stroke="#333" stroke-width="1.5" fill="#f7f7f7" stroke-linejoin="round"/></svg>
<div class="t" style="left:1692.8px;width:800px;text-align:center;top:202.4px;font-size:18px;color:#242424;font-weight:normal;font-style:normal;">Сортувати й</div>
<div class="t" style="left:2033.0px;top:227.0px;font-size:18px;color:#242424;font-weight:normal;font-style:normal;">фільтрувати</div>
<svg class="b" style="left:2139.0px;top:233.5px;" width="12" height="8.0" viewBox="0 0 12 8.0" fill="none"><path d="M2 2 L6.0 6.0 L10 2" stroke="#242424" stroke-width="1.5" stroke-linecap="round" stroke-linejoin="round"/></svg>
<svg class="b" style="left:2179.0px;top:140.0px;" width="50" height="50" viewBox="0 0 50 50" fill="none"><circle cx="31.5" cy="17.5" r="15.5" stroke="#333" stroke-width="1.6" fill="#f7f7f7"/><path d="M20.5 28.5L2.5 46.5" stroke="#333" stroke-width="1.6"/></svg>
<div class="t" style="left:1804.3px;width:800px;text-align:center;top:202.4px;font-size:18px;color:#242424;font-weight:normal;font-style:normal;">Знайти й</div>
<div class="t" style="left:2159.3px;top:227.0px;font-size:18px;color:#242424;font-weight:normal;font-style:normal;">виділити</div>
<svg class="b" style="left:2236.0px;top:233.5px;" width="12" height="8.0" viewBox="0 0 12 8.0" fill="none"><path d="M2 2 L6.0 6.0 L10 2" stroke="#242424" stroke-width="1.5" stroke-linecap="round" stroke-linejoin="round"/></svg>
<svg class="b" style="left:2302.0px;top:140.0px;" width="48" height="48" viewBox="0 0 48 48" fill="none"><rect x="2" y="2" width="43" height="43" stroke="#d83b01" stroke-width="1.8" fill="#fff"/><rect x="6" y="6" width="16" height="16" stroke="#d83b01" stroke-width="1.8"/><rect x="26" y="6" width="15" height="16" stroke="#d83b01" stroke-width="1.8"/><rect x="6" y="26" width="16" height="15" stroke="#d83b01" stroke-width="1.8"/><rect x="26" y="26" width="15" height="15" stroke="#d83b01" stroke-width="1.8"/></svg>
<div class="t" style="left:1925.2px;width:800px;text-align:center;top:203.4px;font-size:18px;color:#242424;font-weight:normal;font-style:normal;">Надбудови</div>
<svg class="b" style="left:2505.5px;top:276.8px;" width="19" height="11.5" viewBox="0 0 19 11.5" fill="none"><path d="M2 2 L9.5 9.5 L17 2" stroke="#242424" stroke-width="1.7" stroke-linecap="round" stroke-linejoin="round"/></svg>
<div class="b" style="left:12.80px;top:317.20px;width:156.50px;height:32.80px;background:#fff;border:1px solid #e3e3e3;border-radius:7px;box-sizing:border-box;"></div>
<div class="t" style="left:18.0px;top:323.4px;font-size:20px;color:#1f1f1f;font-weight:normal;font-style:normal;">N4</div>
<svg class="b" style="left:145.0px;top:328.0px;" width="19" height="13" viewBox="0 0 19 13" fill="none"><path d="M2 2L9.3 9.5L16.7 2" stroke="#1f1f1f" stroke-width="1.6" fill="none"/></svg>
<div class="b" style="left:183.80px;top:325.90px;width:3.20px;height:3.20px;background:#333;border-radius:0.5px;"></div>
<div class="b" style="left:183.80px;top:332.20px;width:3.20px;height:3.20px;background:#333;border-radius:0.5px;"></div>
<div class="b" style="left:183.80px;top:338.60px;width:3.20px;height:3.20px;background:#333;border-radius:0.5px;"></div>
<div class="b" style="left:201.80px;top:317.20px;width:131.20px;height:32.80px;background:#fff;border:1px solid #e3e3e3;border-radius:7px;box-sizing:border-box;"></div>
<svg class="b" style="left:209.0px;top:322.0px;" width="24" height="24" viewBox="0 0 24 24" fill="none"><path d="M3 3L20.5 21M20.5 3L3 21" stroke="#9a9a9a" stroke-width="1.5"/></svg>
<svg class="b" style="left:244.0px;top:322.0px;" width="28" height="24" viewBox="0 0 28 24" fill="none"><path d="M2.5 12.5L9 19.5L25.5 3" stroke="#9a9a9a" stroke-width="1.5" fill="none"/></svg>
<div class="t" style="left:283.0px;top:321.4px;font-size:24px;color:#1f1f1f;font-weight:normal;font-style:normal;"><span style="font-family:Liberation Serif;font-style:italic;">ƒx</span></div>
<svg class="b" style="left:314.0px;top:328.0px;" width="19" height="13" viewBox="0 0 19 13" fill="none"><path d="M2 2L9 9L16 2" stroke="#8a8a8a" stroke-width="1.4" fill="none"/></svg>
<div class="b" style="left:341.00px;top:317.20px;width:2206.00px;height:32.80px;background:#fff;border:1px solid #e3e3e3;border-radius:7px;box-sizing:border-box;"></div>
<div class="t" style="left:356.0px;top:323.4px;font-size:20px;color:#1f1f1f;font-weight:normal;font-style:normal;">XII</div>
<svg class="b" style="left:2524.0px;top:327.0px;" width="19" height="13" viewBox="0 0 19 13" fill="none"><path d="M2 2L9.3 9.5L16.7 2" stroke="#1f1f1f" stroke-width="1.6" fill="none"/></svg>
<div class="b" style="left:42.30px;top:391.00px;width:2488.70px;height:666.60px;background:#fff;"></div>
<div class="b" style="left:42.30px;top:361.00px;width:2488.70px;height:29.00px;background:#f0f0f0;"></div>
<div class="b" style="left:3.00px;top:361.00px;width:39.30px;height:696.60px;background:#f0f0f0;border-radius:0 0 0 10px;"></div>
<div class="b" style="left:3.00px;top:389.50px;width:2528.00px;height:1.80px;background:#c8c8c8;"></div>
<div class="b" style="left:41.30px;top:361.00px;width:1.80px;height:696.60px;background:#c8c8c8;"></div>
<svg class="b" style="left:15.0px;top:363.0px;" width="27" height="27" viewBox="0 0 27 27" fill="none"><path d="M25.5 1.5V25.5H1.5Z" fill="#b8b8b8"/></svg>
<div class="b" style="left:86.18px;top:362.00px;width:1.20px;height:28.00px;background:#d0d0d0;"></div>
<div class="t" style="left:14.5px;width:100px;text-align:center;top:366.5px;font-size:19.5px;color:#1f1f1f;font-weight:normal;font-style:normal;">A</div>
<div class="b" style="left:194.90px;top:362.00px;width:1.20px;height:28.00px;background:#d0d0d0;"></div>
<div class="t" style="left:91.1px;width:100px;text-align:center;top:366.5px;font-size:19.5px;color:#1f1f1f;font-weight:normal;font-style:normal;">B</div>
<div class="b" style="left:303.62px;top:362.00px;width:1.20px;height:28.00px;background:#d0d0d0;"></div>
<div class="t" style="left:199.9px;width:100px;text-align:center;top:366.5px;font-size:19.5px;color:#1f1f1f;font-weight:normal;font-style:normal;">C</div>
<div class="b" style="left:412.34px;top:362.00px;width:1.20px;height:28.00px;background:#d0d0d0;"></div>
<div class="t" style="left:308.6px;width:100px;text-align:center;top:366.5px;font-size:19.5px;color:#1f1f1f;font-weight:normal;font-style:normal;">D</div>
<div class="b" style="left:521.06px;top:362.00px;width:1.20px;height:28.00px;background:#d0d0d0;"></div>
<div class="t" style="left:417.3px;width:100px;text-align:center;top:366.5px;font-size:19.5px;color:#1f1f1f;font-weight:normal;font-style:normal;">E</div>
<div class="b" style="left:629.78px;top:362.00px;width:1.20px;height:28.00px;background:#d0d0d0;"></div>
<div class="t" style="left:526.0px;width:100px;text-align:center;top:366.5px;font-size:19.5px;color:#1f1f1f;font-weight:normal;font-style:normal;">F</div>
<div class="b" style="left:738.50px;top:362.00px;width:1.20px;height:28.00px;background:#d0d0d0;"></div>
<div class="t" style="left:634.7px;width:100px;text-align:center;top:366.5px;font-size:19.5px;color:#1f1f1f;font-weight:normal;font-style:normal;">G</div>
<div class="b" style="left:847.22px;top:362.00px;width:1.20px;height:28.00px;background:#d0d0d0;"></div>
<div class="t" style="left:743.5px;width:100px;text-align:center;top:366.5px;font-size:19.5px;color:#1f1f1f;font-weight:normal;font-style:normal;">H</div>
<div class="b" style="left:955.94px;top:362.00px;width:1.20px;height:28.00px;background:#d0d0d0;"></div>
<div class="t" style="left:852.2px;width:100px;text-align:center;top:366.5px;font-size:19.5px;color:#1f1f1f;font-weight:normal;font-style:normal;">I</div>
<div class="b" style="left:1064.66px;top:362.00px;width:1.20px;height:28.00px;background:#d0d0d0;"></div>
<div class="t" style="left:960.9px;width:100px;text-align:center;top:366.5px;font-size:19.5px;color:#1f1f1f;font-weight:normal;font-style:normal;">J</div>
<div class="b" style="left:1173.38px;top:362.00px;width:1.20px;height:28.00px;background:#d0d0d0;"></div>
<div class="t" style="left:1069.6px;width:100px;text-align:center;top:366.5px;font-size:19.5px;color:#1f1f1f;font-weight:normal;font-style:normal;">K</div>
<div class="b" style="left:1282.10px;top:362.00px;width:1.20px;height:28.00px;background:#d0d0d0;"></div>
<div class="t" style="left:1178.3px;width:100px;text-align:center;top:366.5px;font-size:19.5px;color:#1f1f1f;font-weight:normal;font-style:normal;">L</div>
<div class="b" style="left:1390.82px;top:362.00px;width:1.20px;height:28.00px;background:#d0d0d0;"></div>
<div class="t" style="left:1287.1px;width:100px;text-align:center;top:366.5px;font-size:19.5px;color:#1f1f1f;font-weight:normal;font-style:normal;">M</div>
<div class="b" style="left:1499.54px;top:362.00px;width:1.20px;height:28.00px;background:#d0d0d0;"></div>
<div class="t" style="left:1395.8px;width:100px;text-align:center;top:366.5px;font-size:19.5px;color:#1f1f1f;font-weight:normal;font-style:normal;">N</div>
<div class="b" style="left:1608.26px;top:362.00px;width:1.20px;height:28.00px;background:#d0d0d0;"></div>
<div class="t" style="left:1504.5px;width:100px;text-align:center;top:366.5px;font-size:19.5px;color:#1f1f1f;font-weight:normal;font-style:normal;">O</div>
<div class="b" style="left:1716.98px;top:362.00px;width:1.20px;height:28.00px;background:#d0d0d0;"></div>
<div class="t" style="left:1613.2px;width:100px;text-align:center;top:366.5px;font-size:19.5px;color:#1f1f1f;font-weight:normal;font-style:normal;">P</div>
<div class="b" style="left:1825.70px;top:362.00px;width:1.20px;height:28.00px;background:#d0d0d0;"></div>
<div class="t" style="left:1721.9px;width:100px;text-align:center;top:366.5px;font-size:19.5px;color:#1f1f1f;font-weight:normal;font-style:normal;">Q</div>
<div class="b" style="left:1934.42px;top:362.00px;width:1.20px;height:28.00px;background:#d0d0d0;"></div>
<div class="t" style="left:1830.7px;width:100px;text-align:center;top:366.5px;font-size:19.5px;color:#1f1f1f;font-weight:normal;font-style:normal;">R</div>
<div class="b" style="left:2043.14px;top:362.00px;width:1.20px;height:28.00px;background:#d0d0d0;"></div>
<div class="t" style="left:1939.4px;width:100px;text-align:center;top:366.5px;font-size:19.5px;color:#1f1f1f;font-weight:normal;font-style:normal;">S</div>
<div class="b" style="left:2151.86px;top:362.00px;width:1.20px;height:28.00px;background:#d0d0d0;"></div>
<div class="t" style="left:2048.1px;width:100px;text-align:center;top:366.5px;font-size:19.5px;color:#1f1f1f;font-weight:normal;font-style:normal;">T</div>
<div class="b" style="left:2260.58px;top:362.00px;width:1.20px;height:28.00px;background:#d0d0d0;"></div>
<div class="t" style="left:2156.8px;width:100px;text-align:center;top:366.5px;font-size:19.5px;color:#1f1f1f;font-weight:normal;font-style:normal;">U</div>
<div class="b" style="left:2369.30px;top:362.00px;width:1.20px;height:28.00px;background:#d0d0d0;"></div>
<div class="t" style="left:2265.5px;width:100px;text-align:center;top:366.5px;font-size:19.5px;color:#1f1f1f;font-weight:normal;font-style:normal;">V</div>
<div class="b" style="left:2478.02px;top:362.00px;width:1.20px;height:28.00px;background:#d0d0d0;"></div>
<div class="t" style="left:2374.3px;width:100px;text-align:center;top:366.5px;font-size:19.5px;color:#1f1f1f;font-weight:normal;font-style:normal;">W</div>
<div class="b" style="left:2586.74px;top:362.00px;width:1.20px;height:28.00px;background:#d0d0d0;"></div>
<div class="t" style="left:2483.0px;width:100px;text-align:center;top:366.5px;font-size:19.5px;color:#1f1f1f;font-weight:normal;font-style:normal;">X</div>
<div class="b" style="left:3.00px;top:419.90px;width:38.30px;height:1.20px;background:#d0d0d0;"></div>
<div class="t" style="left:1.4px;width:40px;text-align:center;top:395.8px;font-size:20px;color:#1f1f1f;font-weight:normal;font-style:normal;">1</div>
<div class="b" style="left:3.00px;top:482.60px;width:38.30px;height:1.20px;background:#d0d0d0;"></div>
<div class="t" style="left:1.4px;width:40px;text-align:center;top:458.5px;font-size:20px;color:#1f1f1f;font-weight:normal;font-style:normal;">2</div>
<div class="b" style="left:3.00px;top:514.60px;width:38.30px;height:1.20px;background:#d0d0d0;"></div>
<div class="t" style="left:1.4px;width:40px;text-align:center;top:490.5px;font-size:20px;color:#1f1f1f;font-weight:normal;font-style:normal;">3</div>
<div class="b" style="left:3.00px;top:515.20px;width:38.30px;height:38.30px;background:#d2d2d2;"></div>
<div class="b" style="left:40.30px;top:515.20px;width:2.00px;height:38.30px;background:#117a3d;"></div>
<div class="b" style="left:3.00px;top:552.90px;width:38.30px;height:1.20px;background:#d0d0d0;"></div>
<div class="t" style="left:1.4px;width:40px;text-align:center;top:528.8px;font-size:20px;color:#137a3d;font-weight:normal;font-style:normal;">4</div>
<div class="b" style="left:3.00px;top:591.10px;width:38.30px;height:1.20px;background:#d0d0d0;"></div>
<div class="t" style="left:1.4px;width:40px;text-align:center;top:567.0px;font-size:20px;color:#1f1f1f;font-weight:normal;font-style:normal;">5</div>
<div class="b" style="left:3.00px;top:628.90px;width:38.30px;height:1.20px;background:#d0d0d0;"></div>
<div class="t" style="left:1.4px;width:40px;text-align:center;top:604.8px;font-size:20px;color:#1f1f1f;font-weight:normal;font-style:normal;">6</div>
<div class="b" style="left:3.00px;top:666.90px;width:38.30px;height:1.20px;background:#d0d0d0;"></div>
<div class="t" style="left:1.4px;width:40px;text-align:center;top:642.8px;font-size:20px;color:#1f1f1f;font-weight:normal;font-style:normal;">7</div>
<div class="b" style="left:3.00px;top:699.70px;width:38.30px;height:1.20px;background:#d0d0d0;"></div>
<div class="t" style="left:1.4px;width:40px;text-align:center;top:675.6px;font-size:20px;color:#1f1f1f;font-weight:normal;font-style:normal;">8</div>
<div class="b" style="left:3.00px;top:732.20px;width:38.30px;height:1.20px;background:#d0d0d0;"></div>
<div class="t" style="left:1.4px;width:40px;text-align:center;top:708.1px;font-size:20px;color:#1f1f1f;font-weight:normal;font-style:normal;">9</div>
<div class="b" style="left:3.00px;top:764.60px;width:38.30px;height:1.20px;background:#d0d0d0;"></div>
<div class="t" style="left:1.4px;width:40px;text-align:center;top:740.5px;font-size:20px;color:#1f1f1f;font-weight:normal;font-style:normal;">10</div>
<div class="b" style="left:3.00px;top:797.00px;width:38.30px;height:1.20px;background:#d0d0d0;"></div>
<div class="t" style="left:1.4px;width:40px;text-align:center;top:772.9px;font-size:20px;color:#1f1f1f;font-weight:normal;font-style:normal;">11</div>
<div class="b" style="left:3.00px;top:829.50px;width:38.30px;height:1.20px;background:#d0d0d0;"></div>
<div class="t" style="left:1.4px;width:40px;text-align:center;top:805.4px;font-size:20px;color:#1f1f1f;font-weight:normal;font-style:normal;">12</div>
<div class="b" style="left:3.00px;top:862.00px;width:38.30px;height:1.20px;background:#d0d0d0;"></div>
<div class="t" style="left:1.4px;width:40px;text-align:center;top:837.9px;font-size:20px;color:#1f1f1f;font-weight:normal;font-style:normal;">13</div>
<div class="b" style="left:3.00px;top:894.90px;width:38.30px;height:1.20px;background:#d0d0d0;"></div>
<div class="t" style="left:1.4px;width:40px;text-align:center;top:870.8px;font-size:20px;color:#1f1f1f;font-weight:normal;font-style:normal;">14</div>
<div class="b" style="left:3.00px;top:927.20px;width:38.30px;height:1.20px;background:#d0d0d0;"></div>
<div class="t" style="left:1.4px;width:40px;text-align:center;top:903.1px;font-size:20px;color:#1f1f1f;font-weight:normal;font-style:normal;">15</div>
<div class="b" style="left:3.00px;top:959.70px;width:38.30px;height:1.20px;background:#d0d0d0;"></div>
<div class="t" style="left:1.4px;width:40px;text-align:center;top:935.6px;font-size:20px;color:#1f1f1f;font-weight:normal;font-style:normal;">16</div>
<div class="b" style="left:3.00px;top:992.20px;width:38.30px;height:1.20px;background:#d0d0d0;"></div>
<div class="t" style="left:1.4px;width:40px;text-align:center;top:968.1px;font-size:20px;color:#1f1f1f;font-weight:normal;font-style:normal;">17</div>
<div class="b" style="left:3.00px;top:1024.90px;width:38.30px;height:1.20px;background:#d0d0d0;"></div>
<div class="t" style="left:1.4px;width:40px;text-align:center;top:1000.8px;font-size:20px;color:#1f1f1f;font-weight:normal;font-style:normal;">18</div>
<div class="t" style="left:1.4px;width:40px;text-align:center;top:1032.9px;font-size:20px;color:#1f1f1f;font-weight:normal;font-style:normal;">19</div>
<div class="t" style="left:441.0px;width:700px;text-align:center;top:430.3px;font-size:37px;color:#12871a;font-weight:bold;font-style:italic;">Температури за рік</div>
<div class="b" style="left:86.78px;top:483.20px;width:108.72px;height:32.00px;background:#fff;border-top:1.2px solid #6cb46c;border-left:1.2px solid #6cb46c;box-sizing:border-box;"></div>
<div class="b" style="left:86.38px;top:515.20px;width:1.20px;height:542.40px;background:#6cb46c;"></div>
<div class="b" style="left:195.50px;top:483.20px;width:1304.64px;height:32.00px;background:#0c7e10;"></div>
<div class="t" style="left:448.7px;width:800px;text-align:center;top:486.8px;font-size:23px;color:#fff;font-weight:bold;font-style:italic;">Місяць</div>
<div class="b" style="left:86.78px;top:515.20px;width:1413.36px;height:38.30px;background:#0c7e10;"></div>
<div class="t" style="left:91.1px;width:100px;text-align:center;top:521.6px;font-size:23px;color:#fff;font-weight:bold;font-style:italic;">День</div>
<div class="b" style="left:194.80px;top:515.20px;width:1.40px;height:38.30px;background:#9fcf9f;"></div>
<div class="t" style="left:199.9px;width:100px;text-align:center;top:521.8px;font-size:23px;color:#fff;font-weight:bold;font-style:italic;">I</div>
<div class="b" style="left:303.52px;top:515.20px;width:1.40px;height:38.30px;background:#9fcf9f;"></div>
<div class="t" style="left:308.6px;width:100px;text-align:center;top:521.8px;font-size:23px;color:#fff;font-weight:bold;font-style:italic;">II</div>
<div class="b" style="left:412.24px;top:515.20px;width:1.40px;height:38.30px;background:#9fcf9f;"></div>
<div class="t" style="left:417.3px;width:100px;text-align:center;top:521.8px;font-size:23px;color:#fff;font-weight:bold;font-style:italic;">III</div>
<div class="b" style="left:520.96px;top:515.20px;width:1.40px;height:38.30px;background:#9fcf9f;"></div>
<div class="t" style="left:526.0px;width:100px;text-align:center;top:521.8px;font-size:23px;color:#fff;font-weight:bold;font-style:italic;">IV</div>
<div class="b" style="left:629.68px;top:515.20px;width:1.40px;height:38.30px;background:#9fcf9f;"></div>
<div class="t" style="left:634.7px;width:100px;text-align:center;top:521.8px;font-size:23px;color:#fff;font-weight:bold;font-style:italic;">V</div>
<div class="b" style="left:738.40px;top:515.20px;width:1.40px;height:38.30px;background:#9fcf9f;"></div>
<div class="t" style="left:743.5px;width:100px;text-align:center;top:521.8px;font-size:23px;color:#fff;font-weight:bold;font-style:italic;">VI</div>
<div class="b" style="left:847.12px;top:515.20px;width:1.40px;height:38.30px;background:#9fcf9f;"></div>
<div class="t" style="left:852.2px;width:100px;text-align:center;top:521.8px;font-size:23px;color:#fff;font-weight:bold;font-style:italic;">VII</div>
<div class="b" style="left:955.84px;top:515.20px;width:1.40px;height:38.30px;background:#9fcf9f;"></div>
<div class="t" style="left:960.9px;width:100px;text-align:center;top:521.8px;font-size:23px;color:#fff;font-weight:bold;font-style:italic;">VIII</div>
<div class="b" style="left:1064.56px;top:515.20px;width:1.40px;height:38.30px;background:#9fcf9f;"></div>
<div class="t" style="left:1069.6px;width:100px;text-align:center;top:521.8px;font-size:23px;color:#fff;font-weight:bold;font-style:italic;">IX</div>
<div class="b" style="left:1173.28px;top:515.20px;width:1.40px;height:38.30px;background:#9fcf9f;"></div>
<div class="t" style="left:1178.3px;width:100px;text-align:center;top:521.8px;font-size:23px;color:#fff;font-weight:bold;font-style:italic;">X</div>
<div class="b" style="left:1282.00px;top:515.20px;width:1.40px;height:38.30px;background:#9fcf9f;"></div>
<div class="t" style="left:1287.1px;width:100px;text-align:center;top:521.8px;font-size:23px;color:#fff;font-weight:bold;font-style:italic;">XI</div>
<div class="b" style="left:1390.72px;top:515.20px;width:1.40px;height:38.30px;background:#9fcf9f;"></div>
<div class="t" style="left:1395.8px;width:100px;text-align:center;top:521.8px;font-size:23px;color:#fff;font-weight:bold;font-style:italic;">XII</div>
<div class="b" style="left:86.78px;top:514.50px;width:1413.36px;height:1.40px;background:#9fcf9f;"></div>
<div class="b" style="left:86.78px;top:553.50px;width:108.72px;height:504.10px;background:#0c7e10;"></div>
<div class="b" style="left:86.78px;top:552.80px;width:108.72px;height:1.40px;background:#9fcf9f;"></div>
<div class="t" style="left:91.1px;width:100px;text-align:center;top:561.3px;font-size:24px;color:#fff;font-weight:bold;font-style:italic;">1</div>
<div class="b" style="left:86.78px;top:591.00px;width:108.72px;height:1.40px;background:#9fcf9f;"></div>
<div class="t" style="left:91.1px;width:100px;text-align:center;top:599.1px;font-size:24px;color:#fff;font-weight:bold;font-style:italic;">2</div>
<div class="b" style="left:86.78px;top:628.80px;width:108.72px;height:1.40px;background:#9fcf9f;"></div>
<div class="t" style="left:91.1px;width:100px;text-align:center;top:637.1px;font-size:24px;color:#fff;font-weight:bold;font-style:italic;">3</div>
<div class="b" style="left:86.78px;top:666.80px;width:108.72px;height:1.40px;background:#9fcf9f;"></div>
<div class="t" style="left:91.1px;width:100px;text-align:center;top:671.0px;font-size:24px;color:#fff;font-weight:bold;font-style:italic;">4</div>
<div class="b" style="left:86.78px;top:699.60px;width:108.72px;height:1.40px;background:#9fcf9f;"></div>
<div class="t" style="left:91.1px;width:100px;text-align:center;top:703.5px;font-size:24px;color:#fff;font-weight:bold;font-style:italic;">5</div>
<div class="b" style="left:86.78px;top:732.10px;width:108.72px;height:1.40px;background:#9fcf9f;"></div>
<div class="t" style="left:91.1px;width:100px;text-align:center;top:735.9px;font-size:24px;color:#fff;font-weight:bold;font-style:italic;">6</div>
<div class="b" style="left:86.78px;top:764.50px;width:108.72px;height:1.40px;background:#9fcf9f;"></div>
<div class="t" style="left:91.1px;width:100px;text-align:center;top:768.3px;font-size:24px;color:#fff;font-weight:bold;font-style:italic;">7</div>
<div class="b" style="left:86.78px;top:796.90px;width:108.72px;height:1.40px;background:#9fcf9f;"></div>
<div class="t" style="left:91.1px;width:100px;text-align:center;top:800.8px;font-size:24px;color:#fff;font-weight:bold;font-style:italic;">8</div>
<div class="b" style="left:86.78px;top:829.40px;width:108.72px;height:1.40px;background:#9fcf9f;"></div>
<div class="t" style="left:91.1px;width:100px;text-align:center;top:833.3px;font-size:24px;color:#fff;font-weight:bold;font-style:italic;">9</div>
<div class="b" style="left:86.78px;top:861.90px;width:108.72px;height:1.40px;background:#9fcf9f;"></div>
<div class="t" style="left:91.1px;width:100px;text-align:center;top:866.2px;font-size:24px;color:#fff;font-weight:bold;font-style:italic;">10</div>
<div class="b" style="left:86.78px;top:894.80px;width:108.72px;height:1.40px;background:#9fcf9f;"></div>
<div class="t" style="left:91.1px;width:100px;text-align:center;top:898.5px;font-size:24px;color:#fff;font-weight:bold;font-style:italic;">11</div>
<div class="b" style="left:86.78px;top:927.10px;width:108.72px;height:1.40px;background:#9fcf9f;"></div>
<div class="t" style="left:91.1px;width:100px;text-align:center;top:931.0px;font-size:24px;color:#fff;font-weight:bold;font-style:italic;">12</div>
<div class="b" style="left:86.78px;top:959.60px;width:108.72px;height:1.40px;background:#9fcf9f;"></div>
<div class="t" style="left:91.1px;width:100px;text-align:center;top:963.5px;font-size:24px;color:#fff;font-weight:bold;font-style:italic;">13</div>
<div class="b" style="left:86.78px;top:992.10px;width:108.72px;height:1.40px;background:#9fcf9f;"></div>
<div class="t" style="left:91.1px;width:100px;text-align:center;top:996.2px;font-size:24px;color:#fff;font-weight:bold;font-style:italic;">14</div>
<div class="b" style="left:86.78px;top:1024.80px;width:108.72px;height:1.40px;background:#9fcf9f;"></div>
<div class="t" style="left:91.1px;width:100px;text-align:center;top:1028.3px;font-size:24px;color:#fff;font-weight:bold;font-style:italic;">15</div>
<div class="t" style="left:199.9px;width:100px;text-align:center;top:561.7px;font-size:23.5px;color:#111;font-weight:normal;font-style:normal;">-2</div>
<div class="t" style="left:308.6px;width:100px;text-align:center;top:561.7px;font-size:23.5px;color:#111;font-weight:normal;font-style:normal;">-3</div>
<div class="t" style="left:417.3px;width:100px;text-align:center;top:561.7px;font-size:23.5px;color:#111;font-weight:normal;font-style:normal;">-1</div>
<div class="t" style="left:526.0px;width:100px;text-align:center;top:561.7px;font-size:23.5px;color:#111;font-weight:normal;font-style:normal;">5</div>
<div class="t" style="left:634.7px;width:100px;text-align:center;top:561.7px;font-size:23.5px;color:#111;font-weight:normal;font-style:normal;">14</div>
<div class="t" style="left:743.5px;width:100px;text-align:center;top:561.7px;font-size:23.5px;color:#111;font-weight:normal;font-style:normal;">12</div>
<div class="t" style="left:852.2px;width:100px;text-align:center;top:561.7px;font-size:23.5px;color:#111;font-weight:normal;font-style:normal;">30</div>
<div class="t" style="left:960.9px;width:100px;text-align:center;top:561.7px;font-size:23.5px;color:#111;font-weight:normal;font-style:normal;">23</div>
<div class="t" style="left:1069.6px;width:100px;text-align:center;top:561.7px;font-size:23.5px;color:#111;font-weight:normal;font-style:normal;">9</div>
<div class="t" style="left:1178.3px;width:100px;text-align:center;top:561.7px;font-size:23.5px;color:#111;font-weight:normal;font-style:normal;">7</div>
<div class="t" style="left:1287.1px;width:100px;text-align:center;top:561.7px;font-size:23.5px;color:#111;font-weight:normal;font-style:normal;">1</div>
<div class="t" style="left:1395.8px;width:100px;text-align:center;top:561.7px;font-size:23.5px;color:#111;font-weight:normal;font-style:normal;">-1</div>
<div class="t" style="left:199.9px;width:100px;text-align:center;top:599.5px;font-size:23.5px;color:#111;font-weight:normal;font-style:normal;">-7</div>
<div class="t" style="left:308.6px;width:100px;text-align:center;top:599.5px;font-size:23.5px;color:#111;font-weight:normal;font-style:normal;">-1</div>
<div class="t" style="left:417.3px;width:100px;text-align:center;top:599.5px;font-size:23.5px;color:#111;font-weight:normal;font-style:normal;">-1</div>
<div class="t" style="left:526.0px;width:100px;text-align:center;top:599.5px;font-size:23.5px;color:#111;font-weight:normal;font-style:normal;">8</div>
<div class="t" style="left:634.7px;width:100px;text-align:center;top:599.5px;font-size:23.5px;color:#111;font-weight:normal;font-style:normal;">8</div>
<div class="t" style="left:743.5px;width:100px;text-align:center;top:599.5px;font-size:23.5px;color:#111;font-weight:normal;font-style:normal;">0</div>
<div class="t" style="left:852.2px;width:100px;text-align:center;top:599.5px;font-size:23.5px;color:#111;font-weight:normal;font-style:normal;">1</div>
<div class="t" style="left:960.9px;width:100px;text-align:center;top:599.5px;font-size:23.5px;color:#111;font-weight:normal;font-style:normal;">9</div>
<div class="t" style="left:1069.6px;width:100px;text-align:center;top:599.5px;font-size:23.5px;color:#111;font-weight:normal;font-style:normal;">3</div>
<div class="t" style="left:1178.3px;width:100px;text-align:center;top:599.5px;font-size:23.5px;color:#111;font-weight:normal;font-style:normal;">3</div>
<div class="t" style="left:1287.1px;width:100px;text-align:center;top:599.5px;font-size:23.5px;color:#111;font-weight:normal;font-style:normal;">1</div>
<div class="t" style="left:1395.8px;width:100px;text-align:center;top:599.5px;font-size:23.5px;color:#111;font-weight:normal;font-style:normal;">-2</div>
<div class="t" style="left:199.9px;width:100px;text-align:center;top:637.5px;font-size:23.5px;color:#111;font-weight:normal;font-style:normal;">-6</div>
<div class="t" style="left:308.6px;width:100px;text-align:center;top:637.5px;font-size:23.5px;color:#111;font-weight:normal;font-style:normal;">-12</div>
<div class="t" style="left:417.3px;width:100px;text-align:center;top:637.5px;font-size:23.5px;color:#111;font-weight:normal;font-style:normal;">0</div>
<div class="t" style="left:526.0px;width:100px;text-align:center;top:637.5px;font-size:23.5px;color:#111;font-weight:normal;font-style:normal;">8</div>
<div class="t" style="left:634.7px;width:100px;text-align:center;top:637.5px;font-size:23.5px;color:#111;font-weight:normal;font-style:normal;">10</div>
<div class="t" style="left:743.5px;width:100px;text-align:center;top:637.5px;font-size:23.5px;color:#111;font-weight:normal;font-style:normal;">16</div>
<div class="t" style="left:852.2px;width:100px;text-align:center;top:637.5px;font-size:23.5px;color:#111;font-weight:normal;font-style:normal;">21</div>
<div class="t" style="left:960.9px;width:100px;text-align:center;top:637.5px;font-size:23.5px;color:#111;font-weight:normal;font-style:normal;">15</div>
<div class="t" style="left:1069.6px;width:100px;text-align:center;top:637.5px;font-size:23.5px;color:#111;font-weight:normal;font-style:normal;">8</div>
<div class="t" style="left:1178.3px;width:100px;text-align:center;top:637.5px;font-size:23.5px;color:#111;font-weight:normal;font-style:normal;">2</div>
<div class="t" style="left:1287.1px;width:100px;text-align:center;top:637.5px;font-size:23.5px;color:#111;font-weight:normal;font-style:normal;">1</div>
<div class="t" style="left:1395.8px;width:100px;text-align:center;top:637.5px;font-size:23.5px;color:#111;font-weight:normal;font-style:normal;">-3</div>
<div class="t" style="left:199.9px;width:100px;text-align:center;top:671.4px;font-size:23.5px;color:#111;font-weight:normal;font-style:normal;">-10</div>
<div class="t" style="left:308.6px;width:100px;text-align:center;top:671.4px;font-size:23.5px;color:#111;font-weight:normal;font-style:normal;">-3</div>
<div class="t" style="left:417.3px;width:100px;text-align:center;top:671.4px;font-size:23.5px;color:#111;font-weight:normal;font-style:normal;">0</div>
<div class="t" style="left:526.0px;width:100px;text-align:center;top:671.4px;font-size:23.5px;color:#111;font-weight:normal;font-style:normal;">3</div>
<div class="t" style="left:634.7px;width:100px;text-align:center;top:671.4px;font-size:23.5px;color:#111;font-weight:normal;font-style:normal;">1</div>
<div class="t" style="left:743.5px;width:100px;text-align:center;top:671.4px;font-size:23.5px;color:#111;font-weight:normal;font-style:normal;">20</div>
<div class="t" style="left:852.2px;width:100px;text-align:center;top:671.4px;font-size:23.5px;color:#111;font-weight:normal;font-style:normal;">0</div>
<div class="t" style="left:960.9px;width:100px;text-align:center;top:671.4px;font-size:23.5px;color:#111;font-weight:normal;font-style:normal;">25</div>
<div class="t" style="left:1069.6px;width:100px;text-align:center;top:671.4px;font-size:23.5px;color:#111;font-weight:normal;font-style:normal;">9</div>
<div class="t" style="left:1178.3px;width:100px;text-align:center;top:671.4px;font-size:23.5px;color:#111;font-weight:normal;font-style:normal;">2</div>
<div class="t" style="left:1287.1px;width:100px;text-align:center;top:671.4px;font-size:23.5px;color:#111;font-weight:normal;font-style:normal;">1</div>
<div class="t" style="left:1395.8px;width:100px;text-align:center;top:671.4px;font-size:23.5px;color:#111;font-weight:normal;font-style:normal;">-2</div>
<div class="t" style="left:199.9px;width:100px;text-align:center;top:703.9px;font-size:23.5px;color:#111;font-weight:normal;font-style:normal;">-9</div>
<div class="t" style="left:308.6px;width:100px;text-align:center;top:703.9px;font-size:23.5px;color:#111;font-weight:normal;font-style:normal;">-2</div>
<div class="t" style="left:417.3px;width:100px;text-align:center;top:703.9px;font-size:23.5px;color:#111;font-weight:normal;font-style:normal;">-1</div>
<div class="t" style="left:526.0px;width:100px;text-align:center;top:703.9px;font-size:23.5px;color:#111;font-weight:normal;font-style:normal;">3</div>
<div class="t" style="left:634.7px;width:100px;text-align:center;top:703.9px;font-size:23.5px;color:#111;font-weight:normal;font-style:normal;">9</div>
<div class="t" style="left:743.5px;width:100px;text-align:center;top:703.9px;font-size:23.5px;color:#111;font-weight:normal;font-style:normal;">3</div>
<div class="b" style="left:847.82px;top:700.30px;width:108.72px;height:32.50px;background:#ffc7ce;"></div>
<div class="t" style="left:852.2px;width:100px;text-align:center;top:703.9px;font-size:23.5px;color:#9c0006;font-weight:normal;font-style:normal;">30</div>
<div class="t" style="left:960.9px;width:100px;text-align:center;top:703.9px;font-size:23.5px;color:#111;font-weight:normal;font-style:normal;">8</div>
<div class="t" style="left:1069.6px;width:100px;text-align:center;top:703.9px;font-size:23.5px;color:#111;font-weight:normal;font-style:normal;">4</div>
<div class="t" style="left:1178.3px;width:100px;text-align:center;top:703.9px;font-size:23.5px;color:#111;font-weight:normal;font-style:normal;">7</div>
<div class="t" style="left:1287.1px;width:100px;text-align:center;top:703.9px;font-size:23.5px;color:#111;font-weight:normal;font-style:normal;">2</div>
<div class="t" style="left:1395.8px;width:100px;text-align:center;top:703.9px;font-size:23.5px;color:#111;font-weight:normal;font-style:normal;">-1</div>
<div class="t" style="left:199.9px;width:100px;text-align:center;top:736.3px;font-size:23.5px;color:#111;font-weight:normal;font-style:normal;">-1</div>
<div class="t" style="left:308.6px;width:100px;text-align:center;top:736.3px;font-size:23.5px;color:#111;font-weight:normal;font-style:normal;">-1</div>
<div class="t" style="left:417.3px;width:100px;text-align:center;top:736.3px;font-size:23.5px;color:#111;font-weight:normal;font-style:normal;">0</div>
<div class="t" style="left:526.0px;width:100px;text-align:center;top:736.3px;font-size:23.5px;color:#111;font-weight:normal;font-style:normal;">7</div>
<div class="t" style="left:634.7px;width:100px;text-align:center;top:736.3px;font-size:23.5px;color:#111;font-weight:normal;font-style:normal;">15</div>
<div class="t" style="left:743.5px;width:100px;text-align:center;top:736.3px;font-size:23.5px;color:#111;font-weight:normal;font-style:normal;">1</div>
<div class="t" style="left:852.2px;width:100px;text-align:center;top:736.3px;font-size:23.5px;color:#111;font-weight:normal;font-style:normal;">27</div>
<div class="t" style="left:960.9px;width:100px;text-align:center;top:736.3px;font-size:23.5px;color:#111;font-weight:normal;font-style:normal;">25</div>
<div class="t" style="left:1069.6px;width:100px;text-align:center;top:736.3px;font-size:23.5px;color:#111;font-weight:normal;font-style:normal;">7</div>
<div class="t" style="left:1178.3px;width:100px;text-align:center;top:736.3px;font-size:23.5px;color:#111;font-weight:normal;font-style:normal;">7</div>
<div class="t" style="left:1287.1px;width:100px;text-align:center;top:736.3px;font-size:23.5px;color:#111;font-weight:normal;font-style:normal;">1</div>
<div class="t" style="left:1395.8px;width:100px;text-align:center;top:736.3px;font-size:23.5px;color:#111;font-weight:normal;font-style:normal;">-2</div>
<div class="t" style="left:199.9px;width:100px;text-align:center;top:768.7px;font-size:23.5px;color:#111;font-weight:normal;font-style:normal;">-5</div>
<div class="t" style="left:308.6px;width:100px;text-align:center;top:768.7px;font-size:23.5px;color:#111;font-weight:normal;font-style:normal;">-4</div>
<div class="t" style="left:417.3px;width:100px;text-align:center;top:768.7px;font-size:23.5px;color:#111;font-weight:normal;font-style:normal;">1</div>
<div class="t" style="left:526.0px;width:100px;text-align:center;top:768.7px;font-size:23.5px;color:#111;font-weight:normal;font-style:normal;">6</div>
<div class="t" style="left:634.7px;width:100px;text-align:center;top:768.7px;font-size:23.5px;color:#111;font-weight:normal;font-style:normal;">12</div>
<div class="t" style="left:743.5px;width:100px;text-align:center;top:768.7px;font-size:23.5px;color:#111;font-weight:normal;font-style:normal;">14</div>
<div class="t" style="left:852.2px;width:100px;text-align:center;top:768.7px;font-size:23.5px;color:#111;font-weight:normal;font-style:normal;">15</div>
<div class="t" style="left:960.9px;width:100px;text-align:center;top:768.7px;font-size:23.5px;color:#111;font-weight:normal;font-style:normal;">20</div>
<div class="t" style="left:1069.6px;width:100px;text-align:center;top:768.7px;font-size:23.5px;color:#111;font-weight:normal;font-style:normal;">1</div>
<div class="t" style="left:1178.3px;width:100px;text-align:center;top:768.7px;font-size:23.5px;color:#111;font-weight:normal;font-style:normal;">0</div>
<div class="t" style="left:1287.1px;width:100px;text-align:center;top:768.7px;font-size:23.5px;color:#111;font-weight:normal;font-style:normal;">1</div>
<div class="t" style="left:1395.8px;width:100px;text-align:center;top:768.7px;font-size:23.5px;color:#111;font-weight:normal;font-style:normal;">-3</div>
<div class="t" style="left:199.9px;width:100px;text-align:center;top:801.2px;font-size:23.5px;color:#111;font-weight:normal;font-style:normal;">-3</div>
<div class="t" style="left:308.6px;width:100px;text-align:center;top:801.2px;font-size:23.5px;color:#111;font-weight:normal;font-style:normal;">-2</div>
<div class="t" style="left:417.3px;width:100px;text-align:center;top:801.2px;font-size:23.5px;color:#111;font-weight:normal;font-style:normal;">2</div>
<div class="t" style="left:526.0px;width:100px;text-align:center;top:801.2px;font-size:23.5px;color:#111;font-weight:normal;font-style:normal;">9</div>
<div class="t" style="left:634.7px;width:100px;text-align:center;top:801.2px;font-size:23.5px;color:#111;font-weight:normal;font-style:normal;">11</div>
<div class="t" style="left:743.5px;width:100px;text-align:center;top:801.2px;font-size:23.5px;color:#111;font-weight:normal;font-style:normal;">18</div>
<div class="t" style="left:852.2px;width:100px;text-align:center;top:801.2px;font-size:23.5px;color:#111;font-weight:normal;font-style:normal;">6</div>
<div class="t" style="left:960.9px;width:100px;text-align:center;top:801.2px;font-size:23.5px;color:#111;font-weight:normal;font-style:normal;">17</div>
<div class="t" style="left:1069.6px;width:100px;text-align:center;top:801.2px;font-size:23.5px;color:#111;font-weight:normal;font-style:normal;">13</div>
<div class="t" style="left:1178.3px;width:100px;text-align:center;top:801.2px;font-size:23.5px;color:#111;font-weight:normal;font-style:normal;">5</div>
<div class="t" style="left:1287.1px;width:100px;text-align:center;top:801.2px;font-size:23.5px;color:#111;font-weight:normal;font-style:normal;">0</div>
<div class="t" style="left:1395.8px;width:100px;text-align:center;top:801.2px;font-size:23.5px;color:#111;font-weight:normal;font-style:normal;">0</div>
<div class="t" style="left:199.9px;width:100px;text-align:center;top:833.7px;font-size:23.5px;color:#111;font-weight:normal;font-style:normal;">-8</div>
<div class="t" style="left:308.6px;width:100px;text-align:center;top:833.7px;font-size:23.5px;color:#111;font-weight:normal;font-style:normal;">-5</div>
<div class="t" style="left:417.3px;width:100px;text-align:center;top:833.7px;font-size:23.5px;color:#111;font-weight:normal;font-style:normal;">0</div>
<div class="t" style="left:526.0px;width:100px;text-align:center;top:833.7px;font-size:23.5px;color:#111;font-weight:normal;font-style:normal;">4</div>
<div class="t" style="left:634.7px;width:100px;text-align:center;top:833.7px;font-size:23.5px;color:#111;font-weight:normal;font-style:normal;">13</div>
<div class="t" style="left:743.5px;width:100px;text-align:center;top:833.7px;font-size:23.5px;color:#111;font-weight:normal;font-style:normal;">15</div>
<div class="t" style="left:852.2px;width:100px;text-align:center;top:833.7px;font-size:23.5px;color:#111;font-weight:normal;font-style:normal;">15</div>
<div class="t" style="left:960.9px;width:100px;text-align:center;top:833.7px;font-size:23.5px;color:#111;font-weight:normal;font-style:normal;">19</div>
<div class="t" style="left:1069.6px;width:100px;text-align:center;top:833.7px;font-size:23.5px;color:#111;font-weight:normal;font-style:normal;">12</div>
<div class="t" style="left:1178.3px;width:100px;text-align:center;top:833.7px;font-size:23.5px;color:#111;font-weight:normal;font-style:normal;">0</div>
<div class="t" style="left:1287.1px;width:100px;text-align:center;top:833.7px;font-size:23.5px;color:#111;font-weight:normal;font-style:normal;">1</div>
<div class="t" style="left:1395.8px;width:100px;text-align:center;top:833.7px;font-size:23.5px;color:#111;font-weight:normal;font-style:normal;">-2</div>
<div class="t" style="left:199.9px;width:100px;text-align:center;top:866.6px;font-size:23.5px;color:#111;font-weight:normal;font-style:normal;">-4</div>
<div class="t" style="left:308.6px;width:100px;text-align:center;top:866.6px;font-size:23.5px;color:#111;font-weight:normal;font-style:normal;">-3</div>
<div class="t" style="left:417.3px;width:100px;text-align:center;top:866.6px;font-size:23.5px;color:#111;font-weight:normal;font-style:normal;">3</div>
<div class="t" style="left:526.0px;width:100px;text-align:center;top:866.6px;font-size:23.5px;color:#111;font-weight:normal;font-style:normal;">10</div>
<div class="t" style="left:634.7px;width:100px;text-align:center;top:866.6px;font-size:23.5px;color:#111;font-weight:normal;font-style:normal;">16</div>
<div class="t" style="left:743.5px;width:100px;text-align:center;top:866.6px;font-size:23.5px;color:#111;font-weight:normal;font-style:normal;">19</div>
<div class="t" style="left:852.2px;width:100px;text-align:center;top:866.6px;font-size:23.5px;color:#111;font-weight:normal;font-style:normal;">26</div>
<div class="t" style="left:960.9px;width:100px;text-align:center;top:866.6px;font-size:23.5px;color:#111;font-weight:normal;font-style:normal;">15</div>
<div class="t" style="left:1069.6px;width:100px;text-align:center;top:866.6px;font-size:23.5px;color:#111;font-weight:normal;font-style:normal;">9</div>
<div class="t" style="left:1178.3px;width:100px;text-align:center;top:866.6px;font-size:23.5px;color:#111;font-weight:normal;font-style:normal;">5</div>
<div class="t" style="left:1287.1px;width:100px;text-align:center;top:866.6px;font-size:23.5px;color:#111;font-weight:normal;font-style:normal;">0</div>
<div class="t" style="left:1395.8px;width:100px;text-align:center;top:866.6px;font-size:23.5px;color:#111;font-weight:normal;font-style:normal;">-2</div>
<div class="t" style="left:199.9px;width:100px;text-align:center;top:898.9px;font-size:23.5px;color:#111;font-weight:normal;font-style:normal;">-2</div>
<div class="t" style="left:308.6px;width:100px;text-align:center;top:898.9px;font-size:23.5px;color:#111;font-weight:normal;font-style:normal;">-1</div>
<div class="t" style="left:417.3px;width:100px;text-align:center;top:898.9px;font-size:23.5px;color:#111;font-weight:normal;font-style:normal;">2</div>
<div class="t" style="left:526.0px;width:100px;text-align:center;top:898.9px;font-size:23.5px;color:#111;font-weight:normal;font-style:normal;">7</div>
<div class="t" style="left:634.7px;width:100px;text-align:center;top:898.9px;font-size:23.5px;color:#111;font-weight:normal;font-style:normal;">14</div>
<div class="t" style="left:743.5px;width:100px;text-align:center;top:898.9px;font-size:23.5px;color:#111;font-weight:normal;font-style:normal;">22</div>
<div class="b" style="left:847.82px;top:895.50px;width:108.72px;height:32.30px;background:#ffc7ce;"></div>
<div class="t" style="left:852.2px;width:100px;text-align:center;top:898.9px;font-size:23.5px;color:#9c0006;font-weight:normal;font-style:normal;">30</div>
<div class="t" style="left:960.9px;width:100px;text-align:center;top:898.9px;font-size:23.5px;color:#111;font-weight:normal;font-style:normal;">13</div>
<div class="t" style="left:1069.6px;width:100px;text-align:center;top:898.9px;font-size:23.5px;color:#111;font-weight:normal;font-style:normal;">8</div>
<div class="t" style="left:1178.3px;width:100px;text-align:center;top:898.9px;font-size:23.5px;color:#111;font-weight:normal;font-style:normal;">8</div>
<div class="t" style="left:1287.1px;width:100px;text-align:center;top:898.9px;font-size:23.5px;color:#111;font-weight:normal;font-style:normal;">0</div>
<div class="t" style="left:1395.8px;width:100px;text-align:center;top:898.9px;font-size:23.5px;color:#111;font-weight:normal;font-style:normal;">-1</div>
<div class="t" style="left:199.9px;width:100px;text-align:center;top:931.4px;font-size:23.5px;color:#111;font-weight:normal;font-style:normal;">-6</div>
<div class="t" style="left:308.6px;width:100px;text-align:center;top:931.4px;font-size:23.5px;color:#111;font-weight:normal;font-style:normal;">-2</div>
<div class="t" style="left:417.3px;width:100px;text-align:center;top:931.4px;font-size:23.5px;color:#111;font-weight:normal;font-style:normal;">1</div>
<div class="t" style="left:526.0px;width:100px;text-align:center;top:931.4px;font-size:23.5px;color:#111;font-weight:normal;font-style:normal;">8</div>
<div class="t" style="left:634.7px;width:100px;text-align:center;top:931.4px;font-size:23.5px;color:#111;font-weight:normal;font-style:normal;">17</div>
<div class="t" style="left:743.5px;width:100px;text-align:center;top:931.4px;font-size:23.5px;color:#111;font-weight:normal;font-style:normal;">24</div>
<div class="b" style="left:847.82px;top:927.80px;width:108.72px;height:32.50px;background:#ffc7ce;"></div>
<div class="t" style="left:852.2px;width:100px;text-align:center;top:931.4px;font-size:23.5px;color:#9c0006;font-weight:normal;font-style:normal;">33</div>
<div class="t" style="left:960.9px;width:100px;text-align:center;top:931.4px;font-size:23.5px;color:#111;font-weight:normal;font-style:normal;">14</div>
<div class="t" style="left:1069.6px;width:100px;text-align:center;top:931.4px;font-size:23.5px;color:#111;font-weight:normal;font-style:normal;">5</div>
<div class="t" style="left:1178.3px;width:100px;text-align:center;top:931.4px;font-size:23.5px;color:#111;font-weight:normal;font-style:normal;">7</div>
<div class="t" style="left:1287.1px;width:100px;text-align:center;top:931.4px;font-size:23.5px;color:#111;font-weight:normal;font-style:normal;">1</div>
<div class="t" style="left:1395.8px;width:100px;text-align:center;top:931.4px;font-size:23.5px;color:#111;font-weight:normal;font-style:normal;">-2</div>
<div class="t" style="left:199.9px;width:100px;text-align:center;top:963.9px;font-size:23.5px;color:#111;font-weight:normal;font-style:normal;">-10</div>
<div class="t" style="left:308.6px;width:100px;text-align:center;top:963.9px;font-size:23.5px;color:#111;font-weight:normal;font-style:normal;">-2</div>
<div class="t" style="left:417.3px;width:100px;text-align:center;top:963.9px;font-size:23.5px;color:#111;font-weight:normal;font-style:normal;">0</div>
<div class="t" style="left:526.0px;width:100px;text-align:center;top:963.9px;font-size:23.5px;color:#111;font-weight:normal;font-style:normal;">5</div>
<div class="t" style="left:634.7px;width:100px;text-align:center;top:963.9px;font-size:23.5px;color:#111;font-weight:normal;font-style:normal;">12</div>
<div class="t" style="left:743.5px;width:100px;text-align:center;top:963.9px;font-size:23.5px;color:#111;font-weight:normal;font-style:normal;">21</div>
<div class="t" style="left:852.2px;width:100px;text-align:center;top:963.9px;font-size:23.5px;color:#111;font-weight:normal;font-style:normal;">19</div>
<div class="t" style="left:960.9px;width:100px;text-align:center;top:963.9px;font-size:23.5px;color:#111;font-weight:normal;font-style:normal;">10</div>
<div class="t" style="left:1069.6px;width:100px;text-align:center;top:963.9px;font-size:23.5px;color:#111;font-weight:normal;font-style:normal;">4</div>
<div class="t" style="left:1178.3px;width:100px;text-align:center;top:963.9px;font-size:23.5px;color:#111;font-weight:normal;font-style:normal;">7</div>
<div class="t" style="left:1287.1px;width:100px;text-align:center;top:963.9px;font-size:23.5px;color:#111;font-weight:normal;font-style:normal;">2</div>
<div class="t" style="left:1395.8px;width:100px;text-align:center;top:963.9px;font-size:23.5px;color:#111;font-weight:normal;font-style:normal;">-1</div>
<div class="t" style="left:199.9px;width:100px;text-align:center;top:996.6px;font-size:23.5px;color:#111;font-weight:normal;font-style:normal;">-4</div>
<div class="t" style="left:308.6px;width:100px;text-align:center;top:996.6px;font-size:23.5px;color:#111;font-weight:normal;font-style:normal;">-4</div>
<div class="t" style="left:417.3px;width:100px;text-align:center;top:996.6px;font-size:23.5px;color:#111;font-weight:normal;font-style:normal;">-1</div>
<div class="t" style="left:526.0px;width:100px;text-align:center;top:996.6px;font-size:23.5px;color:#111;font-weight:normal;font-style:normal;">6</div>
<div class="t" style="left:634.7px;width:100px;text-align:center;top:996.6px;font-size:23.5px;color:#111;font-weight:normal;font-style:normal;">10</div>
<div class="t" style="left:743.5px;width:100px;text-align:center;top:996.6px;font-size:23.5px;color:#111;font-weight:normal;font-style:normal;">11</div>
<div class="t" style="left:852.2px;width:100px;text-align:center;top:996.6px;font-size:23.5px;color:#111;font-weight:normal;font-style:normal;">2</div>
<div class="t" style="left:960.9px;width:100px;text-align:center;top:996.6px;font-size:23.5px;color:#111;font-weight:normal;font-style:normal;">20</div>
<div class="t" style="left:1069.6px;width:100px;text-align:center;top:996.6px;font-size:23.5px;color:#111;font-weight:normal;font-style:normal;">6</div>
<div class="t" style="left:1178.3px;width:100px;text-align:center;top:996.6px;font-size:23.5px;color:#111;font-weight:normal;font-style:normal;">1</div>
<div class="t" style="left:1287.1px;width:100px;text-align:center;top:996.6px;font-size:23.5px;color:#111;font-weight:normal;font-style:normal;">1</div>
<div class="t" style="left:1395.8px;width:100px;text-align:center;top:996.6px;font-size:23.5px;color:#111;font-weight:normal;font-style:normal;">-2</div>
<div class="t" style="left:199.9px;width:100px;text-align:center;top:1028.7px;font-size:23.5px;color:#111;font-weight:normal;font-style:normal;">-8</div>
<div class="t" style="left:308.6px;width:100px;text-align:center;top:1028.7px;font-size:23.5px;color:#111;font-weight:normal;font-style:normal;">-3</div>
<div class="t" style="left:417.3px;width:100px;text-align:center;top:1028.7px;font-size:23.5px;color:#111;font-weight:normal;font-style:normal;">-1</div>
<div class="t" style="left:526.0px;width:100px;text-align:center;top:1028.7px;font-size:23.5px;color:#111;font-weight:normal;font-style:normal;">1</div>
<div class="t" style="left:634.7px;width:100px;text-align:center;top:1028.7px;font-size:23.5px;color:#111;font-weight:normal;font-style:normal;">6</div>
<div class="t" style="left:743.5px;width:100px;text-align:center;top:1028.7px;font-size:23.5px;color:#111;font-weight:normal;font-style:normal;">14</div>
<div class="t" style="left:852.2px;width:100px;text-align:center;top:1028.7px;font-size:23.5px;color:#111;font-weight:normal;font-style:normal;">19</div>
<div class="t" style="left:960.9px;width:100px;text-align:center;top:1028.7px;font-size:23.5px;color:#111;font-weight:normal;font-style:normal;">4</div>
<div class="t" style="left:1069.6px;width:100px;text-align:center;top:1028.7px;font-size:23.5px;color:#111;font-weight:normal;font-style:normal;">14</div>
<div class="t" style="left:1178.3px;width:100px;text-align:center;top:1028.7px;font-size:23.5px;color:#111;font-weight:normal;font-style:normal;">8</div>
<div class="t" style="left:1287.1px;width:100px;text-align:center;top:1028.7px;font-size:23.5px;color:#111;font-weight:normal;font-style:normal;">2</div>
<div class="t" style="left:1395.8px;width:100px;text-align:center;top:1028.7px;font-size:23.5px;color:#111;font-weight:normal;font-style:normal;">0</div>
<div class="b" style="left:195.50px;top:552.90px;width:1304.64px;height:1.20px;background:#6cb46c;"></div>
<div class="b" style="left:195.50px;top:591.10px;width:1304.64px;height:1.20px;background:#6cb46c;"></div>
<div class="b" style="left:195.50px;top:628.90px;width:1304.64px;height:1.20px;background:#6cb46c;"></div>
<div class="b" style="left:195.50px;top:666.90px;width:1304.64px;height:1.20px;background:#6cb46c;"></div>
<div class="b" style="left:195.50px;top:699.70px;width:1304.64px;height:1.20px;background:#6cb46c;"></div>
<div class="b" style="left:195.50px;top:732.20px;width:1304.64px;height:1.20px;background:#6cb46c;"></div>
<div class="b" style="left:195.50px;top:764.60px;width:1304.64px;height:1.20px;background:#6cb46c;"></div>
<div class="b" style="left:195.50px;top:797.00px;width:1304.64px;height:1.20px;background:#6cb46c;"></div>
<div class="b" style="left:195.50px;top:829.50px;width:1304.64px;height:1.20px;background:#6cb46c;"></div>
<div class="b" style="left:195.50px;top:862.00px;width:1304.64px;height:1.20px;background:#6cb46c;"></div>
<div class="b" style="left:195.50px;top:894.90px;width:1304.64px;height:1.20px;background:#6cb46c;"></div>
<div class="b" style="left:195.50px;top:927.20px;width:1304.64px;height:1.20px;background:#6cb46c;"></div>
<div class="b" style="left:195.50px;top:959.70px;width:1304.64px;height:1.20px;background:#6cb46c;"></div>
<div class="b" style="left:195.50px;top:992.20px;width:1304.64px;height:1.20px;background:#6cb46c;"></div>
<div class="b" style="left:195.50px;top:1024.90px;width:1304.64px;height:1.20px;background:#6cb46c;"></div>
<div class="b" style="left:86.78px;top:1057.00px;width:1413.36px;height:1.20px;background:#6cb46c;"></div>
<div class="b" style="left:303.62px;top:553.50px;width:1.20px;height:504.10px;background:#6cb46c;"></div>
<div class="b" style="left:412.34px;top:553.50px;width:1.20px;height:504.10px;background:#6cb46c;"></div>
<div class="b" style="left:521.06px;top:553.50px;width:1.20px;height:504.10px;background:#6cb46c;"></div>
<div class="b" style="left:629.78px;top:553.50px;width:1.20px;height:504.10px;background:#6cb46c;"></div>
<div class="b" style="left:738.50px;top:553.50px;width:1.20px;height:504.10px;background:#6cb46c;"></div>
<div class="b" style="left:847.22px;top:553.50px;width:1.20px;height:504.10px;background:#6cb46c;"></div>
<div class="b" style="left:955.94px;top:553.50px;width:1.20px;height:504.10px;background:#6cb46c;"></div>
<div class="b" style="left:1064.66px;top:553.50px;width:1.20px;height:504.10px;background:#6cb46c;"></div>
<div class="b" style="left:1173.38px;top:553.50px;width:1.20px;height:504.10px;background:#6cb46c;"></div>
<div class="b" style="left:1282.10px;top:553.50px;width:1.20px;height:504.10px;background:#6cb46c;"></div>
<div class="b" style="left:1390.82px;top:553.50px;width:1.20px;height:504.10px;background:#6cb46c;"></div>
<div class="b" style="left:1499.34px;top:483.20px;width:1.60px;height:574.40px;background:#6cb46c;"></div>
<div class="b" style="left:194.90px;top:553.50px;width:1.20px;height:504.10px;background:#6cb46c;"></div>
<div class="t" style="right:97.0px;top:557.3px;font-size:27.4px;color:#0a7d0a;font-weight:normal;font-style:italic;">Відформатувати таблицю відповідно до вимог:</div>
<div class="t" style="right:319.0px;top:633.3px;font-size:27.4px;color:#0a7d0a;font-weight:normal;font-style:italic;">виділити червоним;</div>
<div class="b" style="left:2531.00px;top:361.00px;width:26.00px;height:696.60px;background:#f7f7f7;border-radius:12px 0 10px 0;"></div>
<div class="b" style="left:2531.00px;top:391.00px;width:1.00px;height:666.60px;background:#e6e6e6;"></div>
<svg class="b" style="left:2537.0px;top:367.0px;" width="17" height="14" viewBox="0 0 17 14" fill="none"><path d="M1.5 12.5L8.5 2.5L15.5 12.5Z" fill="#777" stroke="#777" stroke-width="1.5" stroke-linejoin="round"/></svg>
<div class="b" style="left:2539.20px;top:388.30px;width:12.80px;height:681.70px;background:#747474;border-radius:7px;"></div>
<div class="b" style="left:1391.00px;top:270.20px;width:480.50px;height:472.30px;background:#fff;border:2px solid #474747;border-radius:7px;box-sizing:border-box;box-shadow:0 6px 20px rgba(0,0,0,0.22);"></div>
<div class="b" style="left:1394.50px;top:337.00px;width:475.00px;height:64.60px;background:#f5f5f5;"></div>
<div class="b" style="left:1461.70px;top:402.50px;width:407.80px;height:1.20px;background:#e0e0e0;"></div>
<div class="b" style="left:1393.70px;top:602.00px;width:476.30px;height:1.20px;background:#dadada;"></div>
<svg class="b" style="left:1414.0px;top:286.0px;" width="48" height="44" viewBox="0 0 48 44" fill="none"><rect x="1.5" y="1.5" width="42" height="34" fill="#f7f7f7" stroke="#333" stroke-width="1.5"/>
<path d="M1.5 12.5H43.5M1.5 24H43.5M12.5 1.5V35.5M32.5 1.5V35.5" stroke="#555" stroke-width="1.2"/>
<rect x="12.5" y="12.5" width="20" height="11.5" fill="#fbe0a4" stroke="#e3720f" stroke-width="1.7"/>
<rect x="19.5" y="20.5" width="27" height="21" fill="#f7f7f7" stroke="#333" stroke-width="1.5"/>
<path d="M37 26.5L29 30.5L37 34.5M29 37.5H37" stroke="#333" stroke-width="1.3" fill="none"/></svg>
<svg class="b" style="left:1414.0px;top:351.5px;" width="48" height="44" viewBox="0 0 48 44" fill="none"><rect x="1.5" y="1.5" width="42" height="34" fill="#f7f7f7" stroke="#333" stroke-width="1.5"/><path d="M1.5 12.5H43.5M1.5 24H43.5M12.5 1.5V35.5M32.5 1.5V35.5" stroke="#555" stroke-width="1.2"/><rect x="12.5" y="1.5" width="20" height="34" fill="#fbe0a4"/><path d="M12.5 1.5V35.5M32.5 1.5V21M12.5 1.5H32.5" stroke="#e3720f" stroke-width="1.7"/><path d="M22.5 22V4M15 11L22.5 3.5L30 11" stroke="#333" stroke-width="1.5" fill="none"/><rect x="19.5" y="20.5" width="27" height="21" fill="#f7f7f7" stroke="#333" stroke-width="1.5"/><text x="33" y="37" text-anchor="middle" font-family="Liberation Sans" font-size="15" fill="#333" letter-spacing="-1">10</text></svg>
<svg class="b" style="left:1414.0px;top:419.0px;" width="48" height="44" viewBox="0 0 48 44" fill="none"><rect x="1.5" y="1.5" width="42" height="34" fill="#f7f7f7" stroke="#333" stroke-width="1.5"/>
<path d="M1.5 12.5H43.5M1.5 24H43.5M21 1.5V35.5M32.5 1.5V35.5" stroke="#555" stroke-width="1.2"/>
<rect x="8" y="1.5" width="13" height="11" fill="#85b8e6" stroke="#1e6fc0" stroke-width="1.6"/>
<rect x="8" y="12.5" width="5" height="11.5" fill="#85b8e6" stroke="#1e6fc0" stroke-width="1.6"/>
<rect x="8" y="24" width="9" height="11.5" fill="#85b8e6" stroke="#1e6fc0" stroke-width="1.6"/></svg>
<svg class="b" style="left:1414.0px;top:484.5px;" width="48" height="40" viewBox="0 0 48 40" fill="none"><rect x="1.5" y="1.5" width="42" height="33" fill="#f7f7f7" stroke="#333" stroke-width="1.5"/>
<rect x="8" y="1.5" width="28" height="11" fill="#85b8e6" stroke="#1e6fc0" stroke-width="1.6"/>
<rect x="8" y="12.5" width="28" height="11" fill="#fbe0a4" stroke="#e3720f" stroke-width="1.6"/>
<rect x="8" y="23.5" width="28" height="11" fill="#f7a1aa" stroke="#d9281b" stroke-width="1.6"/>
<path d="M1.5 12.5H8M36 12.5H43.5M1.5 23.5H8M36 23.5H43.5" stroke="#555" stroke-width="1.2"/></svg>
<svg class="b" style="left:1414.0px;top:550.0px;" width="48" height="40" viewBox="0 0 48 40" fill="none"><rect x="1.5" y="1.5" width="42" height="33" fill="#f7f7f7" stroke="#333" stroke-width="1.5"/>
<path d="M1.5 12.5H43.5M1.5 23.5H43.5M8 1.5V34.5M36 1.5V34.5" stroke="#555" stroke-width="1.2"/>
<circle cx="14" cy="7" r="2.2" fill="#1e75c8"/><circle cx="14" cy="18" r="2.2" fill="#e81123"/><circle cx="14" cy="29" r="2.2" fill="#1e75c8"/>
<path d="M23 7H32M23 18H32M23 29H32" stroke="#555" stroke-width="1.5"/></svg>
<div class="t" style="left:1469.4px;top:298.0px;font-size:18.5px;color:#1a1a1a;font-weight:bold;font-style:normal;">Правила виділення клітинок</div>
<div class="b" style="left:1469.40px;top:316.20px;width:12.60px;height:1.20px;background:#777;"></div>
<div class="t" style="left:1469.4px;top:363.0px;font-size:18.5px;color:#1a1a1a;font-weight:bold;font-style:normal;">Правила для перших і останніх значень</div>
<div class="b" style="left:1469.40px;top:381.20px;width:12.60px;height:1.20px;background:#777;"></div>
<div class="t" style="left:1469.4px;top:432.0px;font-size:18.5px;color:#1a1a1a;font-weight:bold;font-style:normal;">Гістограми</div>
<div class="b" style="left:1469.40px;top:450.20px;width:12.60px;height:1.20px;background:#777;"></div>
<div class="t" style="left:1469.4px;top:497.0px;font-size:18.5px;color:#1a1a1a;font-weight:bold;font-style:normal;">Кольорові шкали</div>
<div class="b" style="left:1469.40px;top:515.20px;width:12.60px;height:1.20px;background:#777;"></div>
<div class="t" style="left:1469.4px;top:562.3px;font-size:18.5px;color:#1a1a1a;font-weight:bold;font-style:normal;">Набори піктограм</div>
<div class="b" style="left:1469.40px;top:580.50px;width:12.60px;height:1.20px;background:#777;"></div>
<svg class="b" style="left:1847.0px;top:295.0px;" width="14" height="20" viewBox="0 0 14 20" fill="none"><path d="M3 2L10.5 9.5L3 17" stroke="#333" stroke-width="1.5" fill="none"/></svg>
<svg class="b" style="left:1847.0px;top:360.0px;" width="14" height="20" viewBox="0 0 14 20" fill="none"><path d="M3 2L10.5 9.5L3 17" stroke="#333" stroke-width="1.5" fill="none"/></svg>
<svg class="b" style="left:1847.0px;top:428.0px;" width="14" height="20" viewBox="0 0 14 20" fill="none"><path d="M3 2L10.5 9.5L3 17" stroke="#333" stroke-width="1.5" fill="none"/></svg>
<svg class="b" style="left:1847.0px;top:493.0px;" width="14" height="20" viewBox="0 0 14 20" fill="none"><path d="M3 2L10.5 9.5L3 17" stroke="#333" stroke-width="1.5" fill="none"/></svg>
<svg class="b" style="left:1847.0px;top:558.0px;" width="14" height="20" viewBox="0 0 14 20" fill="none"><path d="M3 2L10.5 9.5L3 17" stroke="#333" stroke-width="1.5" fill="none"/></svg>
<svg class="b" style="left:1411.0px;top:614.0px;" width="28" height="24" viewBox="0 0 28 24" fill="none"><rect x="1.5" y="1.5" width="23" height="19" fill="#fff" stroke="#333" stroke-width="1.5"/><path d="M1.5 7.5H24.5M1.5 14.5H24.5M7.5 1.5V20.5M18.5 1.5V20.5" stroke="#555" stroke-width="1.2"/><rect x="7.5" y="7.5" width="11" height="7" fill="#fbe0a4" stroke="#e3720f" stroke-width="1.6"/></svg>
<svg class="b" style="left:1411.0px;top:660.0px;" width="30" height="26" viewBox="0 0 30 26" fill="none"><rect x="1.5" y="1.5" width="23" height="19" fill="#fff" stroke="#333" stroke-width="1.5"/><path d="M1.5 7.5H24.5M1.5 14.5H12M7.5 1.5V20.5M18.5 1.5V7.5" stroke="#555" stroke-width="1.2"/><rect x="7.5" y="7.5" width="11" height="7" fill="#fbe0a4" stroke="#e3720f" stroke-width="1.6"/><path d="M12 19L20 11L26 17L18 25Z" fill="#fff" stroke="#8a2da5" stroke-width="1.6" stroke-linejoin="round"/><path d="M12 19L15.5 15.5L21.5 21.5L18 25Z" fill="#d6a8e0" stroke="#8a2da5" stroke-width="1.4"/></svg>
<svg class="b" style="left:1410.0px;top:704.0px;" width="30" height="26" viewBox="0 0 30 26" fill="none"><path d="M1.5 22V2.5H19" stroke="#333" stroke-width="1.3" fill="none"/><rect x="4.5" y="4.5" width="21" height="19" fill="#fff" stroke="#333" stroke-width="1.5"/><path d="M4.5 10.5H25.5M4.5 17H25.5M10.5 4.5V23.5M19.5 4.5V23.5" stroke="#555" stroke-width="1.2"/><rect x="10.5" y="10.5" width="9" height="6.5" fill="#fbe0a4" stroke="#e3720f" stroke-width="1.6"/></svg>
<div class="t" style="left:1450.5px;top:617.3px;font-size:18.1px;color:#1a1a1a;font-weight:normal;font-style:normal;">Створити правило...</div>
<div class="b" style="left:1450.50px;top:635.30px;width:11.50px;height:1.20px;background:#777;"></div>
<div class="t" style="left:1450.5px;top:663.3px;font-size:18.1px;color:#1a1a1a;font-weight:normal;font-style:normal;">Очистити правила</div>
<div class="b" style="left:1450.50px;top:681.30px;width:13.50px;height:1.20px;background:#777;"></div>
<div class="t" style="left:1450.5px;top:708.9px;font-size:18.1px;color:#1a1a1a;font-weight:normal;font-style:normal;">Керувати правилами...</div>
<div class="b" style="left:1461.00px;top:726.90px;width:8.50px;height:1.20px;background:#777;"></div>
<svg class="b" style="left:1843.0px;top:662.0px;" width="14" height="20" viewBox="0 0 14 20" fill="none"><path d="M3 2L10.5 9.5L3 17" stroke="#333" stroke-width="1.5" fill="none"/></svg>
<div class="b" style="left:1872.20px;top:337.40px;width:329.20px;height:442.80px;background:#fff;border:2px solid #474747;border-radius:7px;box-sizing:border-box;box-shadow:0 6px 20px rgba(0,0,0,0.22);"></div>
<svg class="b" style="left:1894.0px;top:353.8px;" width="48" height="44" viewBox="0 0 48 44" fill="none"><rect x="1.5" y="1.5" width="42" height="34" fill="#f7f7f7" stroke="#333" stroke-width="1.5"/><path d="M1.5 12.5H43.5M1.5 24H43.5M12.5 1.5V35.5M32.5 1.5V35.5" stroke="#555" stroke-width="1.2"/><rect x="12.5" y="1.5" width="20" height="34" fill="#fbe0a4"/><path d="M12.5 1.5V35.5M32.5 1.5V21M12.5 1.5H32.5" stroke="#e3720f" stroke-width="1.7"/><path d="M22.5 22V4M15 11L22.5 3.5L30 11" stroke="#333" stroke-width="1.5" fill="none"/><rect x="19.5" y="20.5" width="27" height="21" fill="#f7f7f7" stroke="#333" stroke-width="1.5"/><text x="33" y="37" text-anchor="middle" font-family="Liberation Sans" font-size="15" fill="#333" letter-spacing="-1">10</text></svg>
<div class="t" style="left:1950.0px;top:362.3px;font-size:18.4px;color:#1a1a1a;font-weight:bold;font-style:normal;">10 перших елементів...</div>
<div class="b" style="left:1950.00px;top:380.50px;width:10.00px;height:1.20px;background:#777;"></div>
<svg class="b" style="left:1894.0px;top:418.5px;" width="48" height="44" viewBox="0 0 48 44" fill="none"><rect x="1.5" y="1.5" width="42" height="34" fill="#f7f7f7" stroke="#333" stroke-width="1.5"/><path d="M1.5 12.5H43.5M1.5 24H43.5M12.5 1.5V35.5M32.5 1.5V35.5" stroke="#555" stroke-width="1.2"/><rect x="12.5" y="1.5" width="20" height="34" fill="#fbe0a4"/><path d="M12.5 1.5V35.5M32.5 1.5V21M12.5 1.5H32.5" stroke="#e3720f" stroke-width="1.7"/><path d="M22.5 22V4M15 11L22.5 3.5L30 11" stroke="#333" stroke-width="1.5" fill="none"/><rect x="19.5" y="20.5" width="27" height="21" fill="#f7f7f7" stroke="#333" stroke-width="1.5"/><text x="33" y="37" text-anchor="middle" font-family="Liberation Sans" font-size="15" fill="#333">%</text></svg>
<div class="t" style="left:1950.0px;top:427.0px;font-size:18.4px;color:#1a1a1a;font-weight:bold;font-style:normal;">Перші 10 %...</div>
<div class="b" style="left:1950.00px;top:445.20px;width:13.00px;height:1.20px;background:#777;"></div>
<svg class="b" style="left:1894.0px;top:483.4px;" width="48" height="44" viewBox="0 0 48 44" fill="none"><rect x="1.5" y="1.5" width="42" height="34" fill="#f7f7f7" stroke="#333" stroke-width="1.5"/><path d="M1.5 12.5H43.5M1.5 24H43.5M12.5 1.5V35.5M32.5 1.5V35.5" stroke="#555" stroke-width="1.2"/><rect x="12.5" y="1.5" width="20" height="34" fill="#fbe0a4"/><path d="M12.5 1.5V35.5M32.5 1.5V21M12.5 1.5H32.5" stroke="#e3720f" stroke-width="1.7"/><path d="M22.5 3V21M15 13.5L22.5 21L30 13.5" stroke="#333" stroke-width="1.5" fill="none"/><rect x="19.5" y="20.5" width="27" height="21" fill="#f7f7f7" stroke="#333" stroke-width="1.5"/><text x="33" y="37" text-anchor="middle" font-family="Liberation Sans" font-size="15" fill="#333" letter-spacing="-1">10</text></svg>
<div class="t" style="left:1950.0px;top:491.9px;font-size:18.4px;color:#1a1a1a;font-weight:bold;font-style:normal;">10 останніх елементів...</div>
<div class="b" style="left:1960.50px;top:510.10px;width:10.50px;height:1.20px;background:#777;"></div>
<svg class="b" style="left:1894.0px;top:548.7px;" width="48" height="44" viewBox="0 0 48 44" fill="none"><rect x="1.5" y="1.5" width="42" height="34" fill="#f7f7f7" stroke="#333" stroke-width="1.5"/><path d="M1.5 12.5H43.5M1.5 24H43.5M12.5 1.5V35.5M32.5 1.5V35.5" stroke="#555" stroke-width="1.2"/><rect x="12.5" y="1.5" width="20" height="34" fill="#fbe0a4"/><path d="M12.5 1.5V35.5M32.5 1.5V21M12.5 1.5H32.5" stroke="#e3720f" stroke-width="1.7"/><path d="M22.5 3V21M15 13.5L22.5 21L30 13.5" stroke="#333" stroke-width="1.5" fill="none"/><rect x="19.5" y="20.5" width="27" height="21" fill="#f7f7f7" stroke="#333" stroke-width="1.5"/><text x="33" y="37" text-anchor="middle" font-family="Liberation Sans" font-size="15" fill="#333">%</text></svg>
<div class="t" style="left:1950.0px;top:557.2px;font-size:18.4px;color:#1a1a1a;font-weight:bold;font-style:normal;">Останні 10 %...</div>
<div class="b" style="left:1950.00px;top:575.40px;width:14.00px;height:1.20px;background:#777;"></div>
<svg class="b" style="left:1894.0px;top:613.5px;" width="48" height="44" viewBox="0 0 48 44" fill="none"><rect x="1.5" y="1.5" width="42" height="34" fill="#f7f7f7" stroke="#333" stroke-width="1.5"/><path d="M1.5 12.5H43.5M1.5 24H43.5M12.5 1.5V35.5M32.5 1.5V35.5" stroke="#555" stroke-width="1.2"/><rect x="12.5" y="1.5" width="20" height="34" fill="#fbe0a4"/><path d="M12.5 1.5V35.5M32.5 1.5V21M12.5 1.5H32.5" stroke="#e3720f" stroke-width="1.7"/><path d="M22.5 22V4M15 11L22.5 3.5L30 11" stroke="#333" stroke-width="1.5" fill="none"/><rect x="19.5" y="20.5" width="27" height="21" fill="#f7f7f7" stroke="#333" stroke-width="1.5"/><text x="33" y="38" text-anchor="middle" font-family="Liberation Serif" font-style="italic" font-size="17" fill="#333">x</text><path d="M29 26H37" stroke="#333" stroke-width="1.1"/></svg>
<div class="t" style="left:1950.0px;top:622.0px;font-size:18.4px;color:#1a1a1a;font-weight:bold;font-style:normal;">Більше середнього...</div>
<div class="b" style="left:1950.00px;top:640.20px;width:12.00px;height:1.20px;background:#777;"></div>
<svg class="b" style="left:1894.0px;top:678.2px;" width="48" height="44" viewBox="0 0 48 44" fill="none"><rect x="1.5" y="1.5" width="42" height="34" fill="#f7f7f7" stroke="#333" stroke-width="1.5"/><path d="M1.5 12.5H43.5M1.5 24H43.5M12.5 1.5V35.5M32.5 1.5V35.5" stroke="#555" stroke-width="1.2"/><rect x="12.5" y="1.5" width="20" height="34" fill="#fbe0a4"/><path d="M12.5 1.5V35.5M32.5 1.5V21M12.5 1.5H32.5" stroke="#e3720f" stroke-width="1.7"/><path d="M22.5 3V21M15 13.5L22.5 21L30 13.5" stroke="#333" stroke-width="1.5" fill="none"/><rect x="19.5" y="20.5" width="27" height="21" fill="#f7f7f7" stroke="#333" stroke-width="1.5"/><text x="33" y="38" text-anchor="middle" font-family="Liberation Serif" font-style="italic" font-size="17" fill="#333">x</text><path d="M29 26H37" stroke="#333" stroke-width="1.1"/></svg>
<div class="t" style="left:1950.0px;top:686.7px;font-size:18.4px;color:#1a1a1a;font-weight:bold;font-style:normal;">Менше середнього...</div>
<div class="b" style="left:1950.00px;top:704.90px;width:16.00px;height:1.20px;background:#777;"></div>
<div class="b" style="left:1874.00px;top:731.00px;width:325.00px;height:1.20px;background:#dadada;"></div>
<div class="t" style="left:1930.2px;top:745.7px;font-size:18.3px;color:#1a1a1a;font-weight:normal;font-style:normal;">Додаткові правила...</div>
<div class="b" style="left:1930.50px;top:764.00px;width:13.50px;height:1.20px;background:#777;"></div>
<div class="b" style="left:234.00px;top:741.50px;width:582.00px;height:211.50px;background:#f0f0f0;border:1px solid #b8b8b8;border-radius:9px;box-sizing:border-box;box-shadow:0 14px 48px rgba(0,0,0,0.45);"></div>
<div class="b" style="left:235.00px;top:742.50px;width:580.00px;height:43.00px;background:#eef2f7;border-radius:8px 8px 0 0;"></div>
<div class="t" style="left:245.0px;top:753.9px;font-size:18.3px;color:#1a1a1a;font-weight:normal;font-style:normal;">Перші 10 елементів</div>
<div class="t" style="left:701.0px;top:754.8px;font-size:17px;color:#333;font-weight:normal;font-style:normal;">?</div>
<svg class="b" style="left:770.0px;top:755.0px;" width="17" height="17" viewBox="0 0 17 17" fill="none"><path d="M1.5 1.5L15 15M15 1.5L1.5 15" stroke="#333" stroke-width="1.4"/></svg>
<div class="t" style="left:245.0px;top:800.3px;font-size:16.8px;color:#111;font-weight:bold;font-style:normal;">Форматувати лише ПЕРШІ клітинки:</div>
<div class="b" style="left:244.30px;top:843.90px;width:80.20px;height:33.40px;background:#fff;border:1px solid #d4d4d4;box-sizing:border-box;"></div>
<div class="t" style="left:248.0px;top:851.8px;font-size:16.8px;color:#111;font-weight:normal;font-style:normal;">5</div>
<div class="b" style="left:297.40px;top:845.00px;width:24.90px;height:15.50px;background:#ececec;border:1px solid #d8d8d8;box-sizing:border-box;"></div>
<div class="b" style="left:297.40px;top:860.50px;width:24.90px;height:15.80px;background:#ececec;border:1px solid #d8d8d8;box-sizing:border-box;"></div>
<svg class="b" style="left:303.0px;top:848.0px;" width="14" height="9" viewBox="0 0 14 9" fill="none"><path d="M2 7L7 2L12 7Z" fill="#222"/></svg>
<svg class="b" style="left:303.0px;top:864.0px;" width="14" height="9" viewBox="0 0 14 9" fill="none"><path d="M2 2L7 7L12 2Z" fill="#222"/></svg>
<div class="t" style="left:339.5px;top:851.5px;font-size:16.8px;color:#111;font-weight:normal;font-style:normal;">з</div>
<div class="b" style="left:362.00px;top:845.40px;width:443.00px;height:30.60px;background:#fff;border:1px solid #c8c8c8;box-sizing:border-box;"></div>
<div class="t" style="left:366.0px;top:851.8px;font-size:16.8px;color:#111;font-weight:normal;font-style:normal;">Блідо-червона заливка з темно-червоним текстом</div>
<div class="b" style="left:777.60px;top:846.40px;width:26.40px;height:27.60px;background:#e5f1fb;border:1px solid #3c8fdc;box-sizing:border-box;"></div>
<svg class="b" style="left:782.0px;top:853.0px;" width="17" height="12" viewBox="0 0 17 12" fill="none"><path d="M2.5 2.5L8.5 8.5L14.5 2.5" stroke="#333" stroke-width="1.3" fill="none"/></svg>
<div class="b" style="left:362.00px;top:875.00px;width:443.00px;height:164.00px;background:#fff;border:1px solid #646464;box-sizing:border-box;"></div>
<div class="b" style="left:363.00px;top:876.60px;width:441.00px;height:23.40px;background:#99c9ef;border:1px dotted #5a5a5a;box-sizing:border-box;"></div>
<div class="t" style="left:364.0px;top:879.2px;font-size:16.8px;color:#111;font-weight:normal;font-style:normal;">Блідо-червона заливка з темно-червоним текстом</div>
<div class="t" style="left:364.0px;top:902.4px;font-size:16.8px;color:#111;font-weight:normal;font-style:normal;">Жовта заливка з темно-жовтим текстом</div>
<div class="t" style="left:364.0px;top:925.5px;font-size:16.8px;color:#111;font-weight:normal;font-style:normal;">Зелена заливка з темно-зеленим текстом</div>
<div class="t" style="left:364.0px;top:948.7px;font-size:16.8px;color:#111;font-weight:normal;font-style:normal;">Блідо-червона заливка</div>
<div class="t" style="left:364.0px;top:971.8px;font-size:16.8px;color:#111;font-weight:normal;font-style:normal;">Червоний текст</div>
<div class="t" style="left:364.0px;top:995.0px;font-size:16.8px;color:#111;font-weight:normal;font-style:normal;">Червона межа</div>
<div class="t" style="left:364.0px;top:1018.1px;font-size:16.8px;color:#111;font-weight:normal;font-style:normal;">Настроюваний формат...</div>
</body></html>
